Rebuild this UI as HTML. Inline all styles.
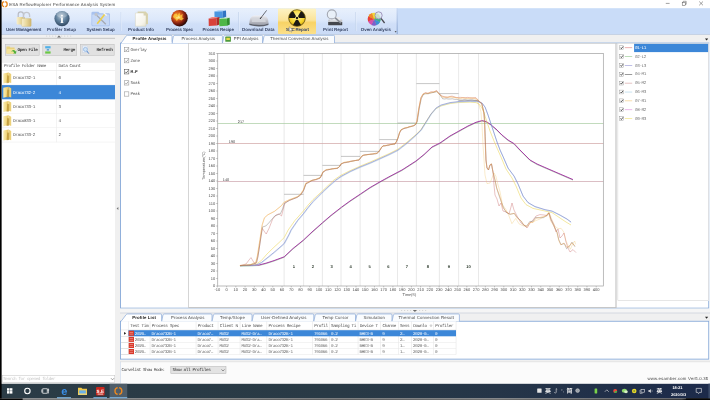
<!DOCTYPE html>
<html lang="en"><head><meta charset="utf-8"><title>ESA ReflowExplorer Performance Analysis System</title>
<style>
html,body{margin:0;padding:0;}
body{width:710px;height:400px;position:relative;overflow:hidden;background:#fff;}
#app{position:absolute;left:0;top:0;width:7100px;height:4000px;transform:scale(0.1);transform-origin:0 0;overflow:hidden;will-change:transform;}
.b{position:absolute;display:block;overflow:visible;}
.t{position:absolute;white-space:nowrap;display:block;text-rendering:geometricPrecision;}
svg text{text-rendering:geometricPrecision;}
.f-s{font-family:"Liberation Sans",sans-serif;}
.f-sb{font-family:"Liberation Sans",sans-serif;font-weight:bold;}
.f-m{font-family:"Liberation Mono",monospace;}
.f-mb{font-family:"Liberation Mono",monospace;font-weight:bold;}
</style></head><body><div id="app">
<div class="b " style="left:0px;top:0px;width:7100px;height:4000px;background:#ffffff;"></div>
<span class="t f-s" style="left:92px;top:14.4px;font-size:44px;line-height:57.2px;color:#454545;letter-spacing:1.46px;">ESA ReflowExplorer Performance Analysis System</span>
<div class="b " style="left:0px;top:82px;width:7100px;height:262px;background:#c9dcf8;"></div>
<div class="b " style="left:0px;top:82px;width:3975px;height:262px;background:linear-gradient(#e8f0fc 0%,#dce8fb 45%,#d0dff8 60%,#cadbf6 100%);"></div>
<div class="b " style="left:3966px;top:82px;width:12px;height:262px;background:linear-gradient(#c4d6f2,#8fa9d4);"></div>
<div class="b " style="left:2780px;top:86px;width:380px;height:254px;background:linear-gradient(#fdf3c4 0%,#fbe49a 45%,#f8d366 55%,#fbe08a 100%);border-radius:10px;"></div>
<div class="b " style="left:1207px;top:120px;width:6px;height:190px;background:#c0d0ea;"></div>
<div class="b " style="left:1213px;top:120px;width:5px;height:190px;background:#e8f0fc;"></div>
<div class="b " style="left:2384px;top:120px;width:6px;height:190px;background:#c0d0ea;"></div>
<div class="b " style="left:2390px;top:120px;width:5px;height:190px;background:#e8f0fc;"></div>
<div class="b " style="left:3553px;top:120px;width:6px;height:190px;background:#c0d0ea;"></div>
<div class="b " style="left:3559px;top:120px;width:5px;height:190px;background:#e8f0fc;"></div>
<span class="t f-sb" style="left:60px;top:260.7px;font-size:45px;line-height:58.5px;color:#3a4868;letter-spacing:-2.51px;">User Management</span>
<span class="t f-sb" style="left:470px;top:260.7px;font-size:45px;line-height:58.5px;color:#3a4868;letter-spacing:-0.36px;">Profiler Setup</span>
<span class="t f-sb" style="left:865px;top:260.7px;font-size:45px;line-height:58.5px;color:#3a4868;letter-spacing:-1.38px;">System Setup</span>
<span class="t f-sb" style="left:1280px;top:260.7px;font-size:45px;line-height:58.5px;color:#3a4868;letter-spacing:-0.41px;">Product Info</span>
<span class="t f-sb" style="left:1660px;top:260.7px;font-size:45px;line-height:58.5px;color:#3a4868;letter-spacing:-2.35px;">Process Spec</span>
<span class="t f-sb" style="left:2025px;top:260.7px;font-size:45px;line-height:58.5px;color:#3a4868;letter-spacing:-1.59px;">Process Recipe</span>
<span class="t f-sb" style="left:2420px;top:260.7px;font-size:45px;line-height:58.5px;color:#3a4868;letter-spacing:0.07px;">Download Data</span>
<span class="t f-sb" style="left:2860px;top:260.7px;font-size:45px;line-height:58.5px;color:#3a4868;letter-spacing:-2.3px;">SPC Report</span>
<span class="t f-sb" style="left:3230px;top:260.7px;font-size:45px;line-height:58.5px;color:#3a4868;letter-spacing:-0.83px;">Print Report</span>
<span class="t f-sb" style="left:3608px;top:260.7px;font-size:45px;line-height:58.5px;color:#3a4868;letter-spacing:-0.64px;">Oven  Analysis</span>
<div class="b " style="left:0px;top:344px;width:7100px;height:90px;background:#f0f0f0;"></div>
<div class="b " style="left:0px;top:342px;width:7100px;height:5px;background:#9fb3d3;"></div>
<div class="b " style="left:0px;top:380px;width:1200px;height:3460px;background:#f0f0f0;"></div>
<div class="b " style="left:20px;top:379px;width:1130px;height:6px;background:#a9a9a9;"></div>
<div class="b " style="left:460px;top:356px;width:12px;height:10px;background:#d6d6d6;"></div>
<div class="b " style="left:490px;top:356px;width:12px;height:10px;background:#d6d6d6;"></div>
<div class="b " style="left:520px;top:356px;width:12px;height:10px;background:#d6d6d6;"></div>
<div class="b " style="left:550px;top:356px;width:12px;height:10px;background:#d6d6d6;"></div>
<div class="b " style="left:580px;top:356px;width:12px;height:10px;background:#d6d6d6;"></div>
<div class="b " style="left:610px;top:356px;width:12px;height:10px;background:#d6d6d6;"></div>
<div class="b " style="left:640px;top:356px;width:12px;height:10px;background:#d6d6d6;"></div>
<div class="b " style="left:670px;top:356px;width:12px;height:10px;background:#d6d6d6;"></div>
<div class="b " style="left:700px;top:356px;width:12px;height:10px;background:#d6d6d6;"></div>
<svg class="b" style="left:565px;top:350px;width:50px;height:30px" viewBox="0 0 5 3"><path d="M0.5 2.5 L2.5 0.5 L4.5 2.5 Z" fill="#6a6a6a"/></svg>
<div class="b " style="left:50px;top:440px;width:344px;height:116px;background:#e1e1e1;border:5px solid #bdbdbd;box-sizing:border-box;"></div>
<span class="t f-mb" style="left:175px;top:471.4px;font-size:44px;line-height:57.2px;color:#3a3a3a;letter-spacing:-4.18px;">Open File</span>
<div class="b " style="left:426px;top:440px;width:344px;height:116px;background:#e1e1e1;border:5px solid #bdbdbd;box-sizing:border-box;"></div>
<span class="t f-mb" style="left:635px;top:471.4px;font-size:44px;line-height:57.2px;color:#3a3a3a;letter-spacing:-3.4px;">Merge</span>
<div class="b " style="left:800px;top:440px;width:344px;height:116px;background:#e1e1e1;border:5px solid #bdbdbd;box-sizing:border-box;"></div>
<span class="t f-mb" style="left:965px;top:471.4px;font-size:44px;line-height:57.2px;color:#3a3a3a;letter-spacing:-3.55px;">Refresh</span>
<div class="b " style="left:20px;top:620px;width:1130px;height:3134px;background:#ffffff;"></div>
<div class="b " style="left:20px;top:620px;width:1130px;height:87px;background:#ffffff;border-bottom:5px solid #e0e0e0;border-top:5px solid #e5e5e5;box-sizing:border-box;"></div>
<div class="b " style="left:564px;top:620px;width:5px;height:802px;background:#e6e6e6;"></div>
<span class="t f-m" style="left:40px;top:635.4px;font-size:44px;line-height:57.2px;color:#555;letter-spacing:-4.3px;">Profile Folder Name</span>
<span class="t f-m" style="left:586px;top:635.4px;font-size:44px;line-height:57.2px;color:#555;letter-spacing:-4.4px;">Data Count</span>
<div class="b " style="left:20px;top:846.7px;width:1130px;height:5px;background:#ececec;"></div>
<span class="t f-m" style="left:130px;top:752.8px;font-size:44px;line-height:57.2px;color:#5a5a5a;letter-spacing:-4.4px;">Draco732-1</span>
<span class="t f-m" style="left:586px;top:752.8px;font-size:44px;line-height:57.2px;color:#5a5a5a;">0</span>
<svg class="b" style="left:30px;top:723px;width:95px;height:115px" viewBox="0 0 9.5 11.5"><defs><linearGradient id="fg0" x1="0" x2="1"><stop offset="0" stop-color="#faecb0"/><stop offset="0.55" stop-color="#f2d984"/><stop offset="1" stop-color="#e2bc58"/></linearGradient></defs><path d="M0.3 1.2 L5.6 0.2 L5.6 10 L0.3 11.2 Z" fill="url(#fg0)"/><path d="M5.6 0.2 L8.2 1.6 L8.2 10.8 L5.6 10 Z" fill="#ecd078"/><path d="M4.2 3 L6.2 3.4 L6 10.6 L3.6 10.9 Z" fill="#b8902e" opacity="0.7"/></svg>
<div class="b " style="left:20px;top:850.7px;width:1130px;height:142.7px;background:#3c87d8;"></div>
<span class="t f-m" style="left:130px;top:895.5px;font-size:44px;line-height:57.2px;color:#fff;letter-spacing:-4.4px;">Draco732-2</span>
<span class="t f-m" style="left:586px;top:895.5px;font-size:44px;line-height:57.2px;color:#fff;">4</span>
<svg class="b" style="left:30px;top:865.7px;width:95px;height:115px" viewBox="0 0 9.5 11.5"><defs><linearGradient id="fg1" x1="0" x2="1"><stop offset="0" stop-color="#faecb0"/><stop offset="0.55" stop-color="#f2d984"/><stop offset="1" stop-color="#e2bc58"/></linearGradient></defs><path d="M0.3 1.2 L5.6 0.2 L5.6 10 L0.3 11.2 Z" fill="url(#fg1)"/><path d="M5.6 0.2 L8.2 1.6 L8.2 10.8 L5.6 10 Z" fill="#ecd078"/><path d="M4.2 3 L6.2 3.4 L6 10.6 L3.6 10.9 Z" fill="#b8902e" opacity="0.7"/></svg>
<div class="b " style="left:20px;top:1132.1px;width:1130px;height:5px;background:#ececec;"></div>
<span class="t f-m" style="left:130px;top:1038.2px;font-size:44px;line-height:57.2px;color:#5a5a5a;letter-spacing:-4.4px;">Draco733-1</span>
<span class="t f-m" style="left:586px;top:1038.2px;font-size:44px;line-height:57.2px;color:#5a5a5a;">3</span>
<svg class="b" style="left:30px;top:1008.4px;width:95px;height:115px" viewBox="0 0 9.5 11.5"><defs><linearGradient id="fg2" x1="0" x2="1"><stop offset="0" stop-color="#faecb0"/><stop offset="0.55" stop-color="#f2d984"/><stop offset="1" stop-color="#e2bc58"/></linearGradient></defs><path d="M0.3 1.2 L5.6 0.2 L5.6 10 L0.3 11.2 Z" fill="url(#fg2)"/><path d="M5.6 0.2 L8.2 1.6 L8.2 10.8 L5.6 10 Z" fill="#ecd078"/><path d="M4.2 3 L6.2 3.4 L6 10.6 L3.6 10.9 Z" fill="#b8902e" opacity="0.7"/></svg>
<div class="b " style="left:20px;top:1274.8px;width:1130px;height:5px;background:#ececec;"></div>
<span class="t f-m" style="left:130px;top:1180.9px;font-size:44px;line-height:57.2px;color:#5a5a5a;letter-spacing:-4.4px;">Draco833-1</span>
<span class="t f-m" style="left:586px;top:1180.9px;font-size:44px;line-height:57.2px;color:#5a5a5a;">4</span>
<svg class="b" style="left:30px;top:1151.1px;width:95px;height:115px" viewBox="0 0 9.5 11.5"><defs><linearGradient id="fg3" x1="0" x2="1"><stop offset="0" stop-color="#faecb0"/><stop offset="0.55" stop-color="#f2d984"/><stop offset="1" stop-color="#e2bc58"/></linearGradient></defs><path d="M0.3 1.2 L5.6 0.2 L5.6 10 L0.3 11.2 Z" fill="url(#fg3)"/><path d="M5.6 0.2 L8.2 1.6 L8.2 10.8 L5.6 10 Z" fill="#ecd078"/><path d="M4.2 3 L6.2 3.4 L6 10.6 L3.6 10.9 Z" fill="#b8902e" opacity="0.7"/></svg>
<div class="b " style="left:20px;top:1417.5px;width:1130px;height:5px;background:#ececec;"></div>
<span class="t f-m" style="left:130px;top:1323.5px;font-size:44px;line-height:57.2px;color:#5a5a5a;letter-spacing:-4.4px;">Draco733-2</span>
<span class="t f-m" style="left:586px;top:1323.5px;font-size:44px;line-height:57.2px;color:#5a5a5a;">2</span>
<svg class="b" style="left:30px;top:1293.8px;width:95px;height:115px" viewBox="0 0 9.5 11.5"><defs><linearGradient id="fg4" x1="0" x2="1"><stop offset="0" stop-color="#faecb0"/><stop offset="0.55" stop-color="#f2d984"/><stop offset="1" stop-color="#e2bc58"/></linearGradient></defs><path d="M0.3 1.2 L5.6 0.2 L5.6 10 L0.3 11.2 Z" fill="url(#fg4)"/><path d="M5.6 0.2 L8.2 1.6 L8.2 10.8 L5.6 10 Z" fill="#ecd078"/><path d="M4.2 3 L6.2 3.4 L6 10.6 L3.6 10.9 Z" fill="#b8902e" opacity="0.7"/></svg>
<div class="b " style="left:20px;top:3754px;width:1130px;height:72px;background:#ffffff;border:5px solid #c4c4c4;box-sizing:border-box;"></div>
<span class="t f-m" style="left:32px;top:3761.4px;font-size:44px;line-height:57.2px;color:#c9c9c9;letter-spacing:-4.74px;">Search for opened folder</span>
<svg class="b" style="left:1105px;top:3776px;width:40px;height:30px" viewBox="0 0 4 3"><path d="M0.5 0.6 L2 2.2 L3.5 0.6" fill="none" stroke="#666" stroke-width="0.6"/></svg>
<svg class="b" style="left:1160px;top:2065px;width:30px;height:40px" viewBox="0 0 3 4"><path d="M2.4 0.4 L0.6 2 L2.4 3.6 Z" fill="#777"/></svg>
<div class="b " style="left:1200px;top:426px;width:5892px;height:2660px;background:#ffffff;border:9px solid #86a8d8;box-sizing:border-box;"></div>
<svg class="b" style="left:1720px;top:350px;width:534px;height:82px" viewBox="0 0 53.40 8.20"><path d="M0 8.20 L1.40 1.2 Q2.00 0.35 3.00 0.35 L49.40 0.35 Q50.40 0.35 50.40 1.4 L50.40 8.20" fill="#fafcfe" stroke="#86a8d8" stroke-width="0.7"/></svg>
<span class="t f-s" style="left:1814px;top:362px;font-size:43px;line-height:55.9px;color:#484848;letter-spacing:0.69px;">Process Analysis</span>
<svg class="b" style="left:2224px;top:350px;width:432px;height:82px" viewBox="0 0 43.20 8.20"><path d="M0 8.20 L1.40 1.2 Q2.00 0.35 3.00 0.35 L39.20 0.35 Q40.20 0.35 40.20 1.4 L40.20 8.20" fill="#fafcfe" stroke="#86a8d8" stroke-width="0.7"/></svg>
<span class="t f-s" style="left:2338px;top:362px;font-size:43px;line-height:55.9px;color:#484848;letter-spacing:0.75px;">PPI Analysis</span>
<svg class="b" style="left:2626px;top:350px;width:749px;height:82px" viewBox="0 0 74.90 8.20"><path d="M0 8.20 L1.40 1.2 Q2.00 0.35 3.00 0.35 L70.90 0.35 Q71.90 0.35 71.90 1.4 L71.90 8.20" fill="#fafcfe" stroke="#86a8d8" stroke-width="0.7"/></svg>
<span class="t f-s" style="left:2703px;top:362px;font-size:43px;line-height:55.9px;color:#484848;letter-spacing:0.98px;">Thermal Convection Analysis</span>
<svg class="b" style="left:1210px;top:350px;width:540px;height:82px" viewBox="0 0 54.00 8.20"><path d="M0 8.20 L5.00 1.2 Q5.60 0.35 6.60 0.35 L50.00 0.35 Q51.00 0.35 51.00 1.4 L51.00 8.20" fill="#ffffff" stroke="#86a8d8" stroke-width="0.7"/></svg>
<span class="t f-sb" style="left:1326px;top:362px;font-size:43px;line-height:55.9px;color:#1a1a1a;letter-spacing:1.19px;">Profile Analysis</span>
<div class="b " style="left:1220px;top:423px;width:496px;height:10px;background:#ffffff;"></div>
<div class="b " style="left:2253px;top:366px;width:56px;height:52px;background:#4e9a3a;border-radius:6px;"></div>
<div class="b " style="left:2263px;top:378px;width:36px;height:22px;background:#e8d84a;"></div>
<svg class="b" style="left:7046px;top:382px;width:40px;height:26px" viewBox="0 0 4 2.6"><path d="M0.4 0.3 L3.6 0.3 L2 2.3 Z" fill="#222"/></svg>
<div class="b " style="left:1882px;top:432px;width:5px;height:2646px;background:#b4b4b4;"></div>
<div class="b " style="left:1243px;top:472px;width:48px;height:48px;background:#fff;border:5px solid #8a8a8a;box-sizing:border-box;"></div>
<svg class="b" style="left:1243px;top:472px;width:48px;height:48px" viewBox="0 0 4.8 4.8"><path d="M1 2.4 L2 3.6 L3.9 1.1" fill="none" stroke="#8a8a8a" stroke-width="0.7"/></svg>
<span class="t f-m" style="left:1306px;top:469.4px;font-size:44px;line-height:57.2px;color:#606060;letter-spacing:-3.8px;">Overlay</span>
<div class="b " style="left:1243px;top:583px;width:48px;height:48px;background:#fff;border:5px solid #8a8a8a;box-sizing:border-box;"></div>
<svg class="b" style="left:1243px;top:583px;width:48px;height:48px" viewBox="0 0 4.8 4.8"><path d="M1 2.4 L2 3.6 L3.9 1.1" fill="none" stroke="#8a8a8a" stroke-width="0.7"/></svg>
<span class="t f-m" style="left:1306px;top:580.4px;font-size:44px;line-height:57.2px;color:#606060;letter-spacing:-3.8px;">Zone</span>
<div class="b " style="left:1243px;top:694px;width:48px;height:48px;background:#fff;border:5px solid #444;box-sizing:border-box;"></div>
<svg class="b" style="left:1243px;top:694px;width:48px;height:48px" viewBox="0 0 4.8 4.8"><path d="M1 2.4 L2 3.6 L3.9 1.1" fill="none" stroke="#444" stroke-width="0.7"/></svg>
<span class="t f-mb" style="left:1306px;top:691.4px;font-size:44px;line-height:57.2px;color:#222;letter-spacing:-3.8px;">M.P</span>
<div class="b " style="left:1243px;top:805px;width:48px;height:48px;background:#fff;border:5px solid #8a8a8a;box-sizing:border-box;"></div>
<svg class="b" style="left:1243px;top:805px;width:48px;height:48px" viewBox="0 0 4.8 4.8"><path d="M1 2.4 L2 3.6 L3.9 1.1" fill="none" stroke="#8a8a8a" stroke-width="0.7"/></svg>
<span class="t f-m" style="left:1306px;top:802.4px;font-size:44px;line-height:57.2px;color:#606060;letter-spacing:-3.8px;">Soak</span>
<div class="b " style="left:1243px;top:916px;width:48px;height:48px;background:#fff;border:5px solid #8a8a8a;box-sizing:border-box;"></div>
<span class="t f-m" style="left:1306px;top:913.4px;font-size:44px;line-height:57.2px;color:#606060;letter-spacing:-3.8px;">Peak</span>
<div class="b " style="left:1884px;top:432px;width:4280px;height:2646px;background:#ffffff;border:5px solid #b9b9b9;border-right:8px solid #a8a8a8;border-bottom:7px solid #b0b0b0;box-sizing:border-box;"></div>
<div class="b " style="left:6176px;top:432px;width:912px;height:2576px;background:#ffffff;border:5px solid #cdcdcd;box-sizing:border-box;"></div>
<svg class="b" style="left:0;top:0;width:7100px;height:4000px" viewBox="0 0 710 400" font-family="Liberation Sans, sans-serif">
<line x1="284.1" y1="53.5" x2="284.1" y2="286.0" stroke="#d6d6d6" stroke-width="0.55"/>
<line x1="303.6" y1="53.5" x2="303.6" y2="286.0" stroke="#d6d6d6" stroke-width="0.55"/>
<line x1="322.4" y1="53.5" x2="322.4" y2="286.0" stroke="#d6d6d6" stroke-width="0.55"/>
<line x1="341.0" y1="53.5" x2="341.0" y2="286.0" stroke="#d6d6d6" stroke-width="0.55"/>
<line x1="360.1" y1="53.5" x2="360.1" y2="286.0" stroke="#d6d6d6" stroke-width="0.55"/>
<line x1="379.3" y1="53.5" x2="379.3" y2="286.0" stroke="#d6d6d6" stroke-width="0.55"/>
<line x1="397.5" y1="53.5" x2="397.5" y2="286.0" stroke="#d6d6d6" stroke-width="0.55"/>
<line x1="416.4" y1="53.5" x2="416.4" y2="286.0" stroke="#d6d6d6" stroke-width="0.55"/>
<line x1="439.4" y1="53.5" x2="439.4" y2="286.0" stroke="#d6d6d6" stroke-width="0.55"/>
<line x1="458.6" y1="53.5" x2="458.6" y2="286.0" stroke="#d6d6d6" stroke-width="0.55"/>
<line x1="478.5" y1="53.5" x2="478.5" y2="286.0" stroke="#d6d6d6" stroke-width="0.55"/>
<line x1="217.75" y1="123.50" x2="603.3" y2="123.50" stroke="#a8cca0" stroke-width="0.7"/>
<text x="241" y="122.50" font-size="3.8" fill="#444" text-anchor="middle">217</text>
<line x1="217.75" y1="143.50" x2="603.3" y2="143.50" stroke="#d0a4a4" stroke-width="0.7"/>
<text x="232" y="142.50" font-size="3.8" fill="#444" text-anchor="middle">190</text>
<line x1="217.75" y1="181.50" x2="603.3" y2="181.50" stroke="#cca2aa" stroke-width="0.7"/>
<text x="226" y="180.50" font-size="3.8" fill="#444" text-anchor="middle">140</text>
<line x1="284.1" y1="194.3" x2="303.6" y2="194.3" stroke="#969696" stroke-width="0.55"/>
<line x1="303.6" y1="175.4" x2="322.4" y2="175.4" stroke="#969696" stroke-width="0.55"/>
<line x1="322.4" y1="165.4" x2="341.0" y2="165.4" stroke="#969696" stroke-width="0.55"/>
<line x1="341.0" y1="156.4" x2="360.1" y2="156.4" stroke="#969696" stroke-width="0.55"/>
<line x1="360.1" y1="151.4" x2="379.3" y2="151.4" stroke="#969696" stroke-width="0.55"/>
<line x1="379.3" y1="139.6" x2="397.5" y2="139.6" stroke="#969696" stroke-width="0.55"/>
<line x1="397.5" y1="123.0" x2="416.4" y2="123.0" stroke="#969696" stroke-width="0.55"/>
<line x1="416.4" y1="83.6" x2="439.4" y2="83.6" stroke="#969696" stroke-width="0.55"/>
<line x1="439.4" y1="93.6" x2="458.6" y2="93.6" stroke="#969696" stroke-width="0.55"/>
<line x1="458.6" y1="100.4" x2="478.5" y2="100.4" stroke="#969696" stroke-width="0.55"/>
<text x="293.9" y="267.6" font-size="4.1" fill="#2c3a2c" text-anchor="middle" font-weight="bold">1</text>
<text x="313.0" y="267.6" font-size="4.1" fill="#2c3a2c" text-anchor="middle" font-weight="bold">2</text>
<text x="331.7" y="267.6" font-size="4.1" fill="#2c3a2c" text-anchor="middle" font-weight="bold">3</text>
<text x="350.6" y="267.6" font-size="4.1" fill="#2c3a2c" text-anchor="middle" font-weight="bold">4</text>
<text x="369.7" y="267.6" font-size="4.1" fill="#2c3a2c" text-anchor="middle" font-weight="bold">5</text>
<text x="388.4" y="267.6" font-size="4.1" fill="#2c3a2c" text-anchor="middle" font-weight="bold">6</text>
<text x="406.9" y="267.6" font-size="4.1" fill="#2c3a2c" text-anchor="middle" font-weight="bold">7</text>
<text x="427.9" y="267.6" font-size="4.1" fill="#2c3a2c" text-anchor="middle" font-weight="bold">8</text>
<text x="449.0" y="267.6" font-size="4.1" fill="#2c3a2c" text-anchor="middle" font-weight="bold">9</text>
<text x="468.6" y="267.6" font-size="4.1" fill="#2c3a2c" text-anchor="middle" font-weight="bold">10</text>
<rect x="217.75" y="53.5" width="385.54999999999995" height="232.5" fill="none" stroke="#989898" stroke-width="0.65"/>
<line x1="216.15" y1="286.00" x2="217.75" y2="286.00" stroke="#8f8f8f" stroke-width="0.5"/>
<text x="215.15" y="287.30" font-size="4" fill="#484848" text-anchor="end">0</text>
<line x1="216.15" y1="278.50" x2="217.75" y2="278.50" stroke="#8f8f8f" stroke-width="0.5"/>
<text x="215.15" y="279.80" font-size="4" fill="#484848" text-anchor="end">10</text>
<line x1="216.15" y1="271.00" x2="217.75" y2="271.00" stroke="#8f8f8f" stroke-width="0.5"/>
<text x="215.15" y="272.30" font-size="4" fill="#484848" text-anchor="end">20</text>
<line x1="216.15" y1="263.50" x2="217.75" y2="263.50" stroke="#8f8f8f" stroke-width="0.5"/>
<text x="215.15" y="264.80" font-size="4" fill="#484848" text-anchor="end">30</text>
<line x1="216.15" y1="256.00" x2="217.75" y2="256.00" stroke="#8f8f8f" stroke-width="0.5"/>
<text x="215.15" y="257.30" font-size="4" fill="#484848" text-anchor="end">40</text>
<line x1="216.15" y1="248.50" x2="217.75" y2="248.50" stroke="#8f8f8f" stroke-width="0.5"/>
<text x="215.15" y="249.80" font-size="4" fill="#484848" text-anchor="end">50</text>
<line x1="216.15" y1="241.00" x2="217.75" y2="241.00" stroke="#8f8f8f" stroke-width="0.5"/>
<text x="215.15" y="242.30" font-size="4" fill="#484848" text-anchor="end">60</text>
<line x1="216.15" y1="233.50" x2="217.75" y2="233.50" stroke="#8f8f8f" stroke-width="0.5"/>
<text x="215.15" y="234.80" font-size="4" fill="#484848" text-anchor="end">70</text>
<line x1="216.15" y1="226.00" x2="217.75" y2="226.00" stroke="#8f8f8f" stroke-width="0.5"/>
<text x="215.15" y="227.30" font-size="4" fill="#484848" text-anchor="end">80</text>
<line x1="216.15" y1="218.50" x2="217.75" y2="218.50" stroke="#8f8f8f" stroke-width="0.5"/>
<text x="215.15" y="219.80" font-size="4" fill="#484848" text-anchor="end">90</text>
<line x1="216.15" y1="211.00" x2="217.75" y2="211.00" stroke="#8f8f8f" stroke-width="0.5"/>
<text x="215.15" y="212.30" font-size="4" fill="#484848" text-anchor="end">100</text>
<line x1="216.15" y1="203.50" x2="217.75" y2="203.50" stroke="#8f8f8f" stroke-width="0.5"/>
<text x="215.15" y="204.80" font-size="4" fill="#484848" text-anchor="end">110</text>
<line x1="216.15" y1="196.00" x2="217.75" y2="196.00" stroke="#8f8f8f" stroke-width="0.5"/>
<text x="215.15" y="197.30" font-size="4" fill="#484848" text-anchor="end">120</text>
<line x1="216.15" y1="188.50" x2="217.75" y2="188.50" stroke="#8f8f8f" stroke-width="0.5"/>
<text x="215.15" y="189.80" font-size="4" fill="#484848" text-anchor="end">130</text>
<line x1="216.15" y1="181.00" x2="217.75" y2="181.00" stroke="#8f8f8f" stroke-width="0.5"/>
<text x="215.15" y="182.30" font-size="4" fill="#484848" text-anchor="end">140</text>
<line x1="216.15" y1="173.50" x2="217.75" y2="173.50" stroke="#8f8f8f" stroke-width="0.5"/>
<text x="215.15" y="174.80" font-size="4" fill="#484848" text-anchor="end">150</text>
<line x1="216.15" y1="166.00" x2="217.75" y2="166.00" stroke="#8f8f8f" stroke-width="0.5"/>
<text x="215.15" y="167.30" font-size="4" fill="#484848" text-anchor="end">160</text>
<line x1="216.15" y1="158.50" x2="217.75" y2="158.50" stroke="#8f8f8f" stroke-width="0.5"/>
<text x="215.15" y="159.80" font-size="4" fill="#484848" text-anchor="end">170</text>
<line x1="216.15" y1="151.00" x2="217.75" y2="151.00" stroke="#8f8f8f" stroke-width="0.5"/>
<text x="215.15" y="152.30" font-size="4" fill="#484848" text-anchor="end">180</text>
<line x1="216.15" y1="143.50" x2="217.75" y2="143.50" stroke="#8f8f8f" stroke-width="0.5"/>
<text x="215.15" y="144.80" font-size="4" fill="#484848" text-anchor="end">190</text>
<line x1="216.15" y1="136.00" x2="217.75" y2="136.00" stroke="#8f8f8f" stroke-width="0.5"/>
<text x="215.15" y="137.30" font-size="4" fill="#484848" text-anchor="end">200</text>
<line x1="216.15" y1="128.50" x2="217.75" y2="128.50" stroke="#8f8f8f" stroke-width="0.5"/>
<text x="215.15" y="129.80" font-size="4" fill="#484848" text-anchor="end">210</text>
<line x1="216.15" y1="121.00" x2="217.75" y2="121.00" stroke="#8f8f8f" stroke-width="0.5"/>
<text x="215.15" y="122.30" font-size="4" fill="#484848" text-anchor="end">220</text>
<line x1="216.15" y1="113.50" x2="217.75" y2="113.50" stroke="#8f8f8f" stroke-width="0.5"/>
<text x="215.15" y="114.80" font-size="4" fill="#484848" text-anchor="end">230</text>
<line x1="216.15" y1="106.00" x2="217.75" y2="106.00" stroke="#8f8f8f" stroke-width="0.5"/>
<text x="215.15" y="107.30" font-size="4" fill="#484848" text-anchor="end">240</text>
<line x1="216.15" y1="98.50" x2="217.75" y2="98.50" stroke="#8f8f8f" stroke-width="0.5"/>
<text x="215.15" y="99.80" font-size="4" fill="#484848" text-anchor="end">250</text>
<line x1="216.15" y1="91.00" x2="217.75" y2="91.00" stroke="#8f8f8f" stroke-width="0.5"/>
<text x="215.15" y="92.30" font-size="4" fill="#484848" text-anchor="end">260</text>
<line x1="216.15" y1="83.50" x2="217.75" y2="83.50" stroke="#8f8f8f" stroke-width="0.5"/>
<text x="215.15" y="84.80" font-size="4" fill="#484848" text-anchor="end">270</text>
<line x1="216.15" y1="76.00" x2="217.75" y2="76.00" stroke="#8f8f8f" stroke-width="0.5"/>
<text x="215.15" y="77.30" font-size="4" fill="#484848" text-anchor="end">280</text>
<line x1="216.15" y1="68.50" x2="217.75" y2="68.50" stroke="#8f8f8f" stroke-width="0.5"/>
<text x="215.15" y="69.80" font-size="4" fill="#484848" text-anchor="end">290</text>
<line x1="216.15" y1="61.00" x2="217.75" y2="61.00" stroke="#8f8f8f" stroke-width="0.5"/>
<text x="215.15" y="62.30" font-size="4" fill="#484848" text-anchor="end">300</text>
<line x1="216.15" y1="53.50" x2="217.75" y2="53.50" stroke="#8f8f8f" stroke-width="0.5"/>
<text x="215.15" y="54.80" font-size="4" fill="#484848" text-anchor="end">310</text>
<line x1="217.36" y1="286.0" x2="217.36" y2="287.4" stroke="#8f8f8f" stroke-width="0.5"/>
<text x="217.36" y="291.4" font-size="4" fill="#484848" text-anchor="middle">-10</text>
<line x1="226.60" y1="286.0" x2="226.60" y2="287.4" stroke="#8f8f8f" stroke-width="0.5"/>
<text x="226.60" y="291.4" font-size="4" fill="#484848" text-anchor="middle">0</text>
<line x1="235.84" y1="286.0" x2="235.84" y2="287.4" stroke="#8f8f8f" stroke-width="0.5"/>
<text x="235.84" y="291.4" font-size="4" fill="#484848" text-anchor="middle">10</text>
<line x1="245.08" y1="286.0" x2="245.08" y2="287.4" stroke="#8f8f8f" stroke-width="0.5"/>
<text x="245.08" y="291.4" font-size="4" fill="#484848" text-anchor="middle">20</text>
<line x1="254.32" y1="286.0" x2="254.32" y2="287.4" stroke="#8f8f8f" stroke-width="0.5"/>
<text x="254.32" y="291.4" font-size="4" fill="#484848" text-anchor="middle">30</text>
<line x1="263.56" y1="286.0" x2="263.56" y2="287.4" stroke="#8f8f8f" stroke-width="0.5"/>
<text x="263.56" y="291.4" font-size="4" fill="#484848" text-anchor="middle">40</text>
<line x1="272.80" y1="286.0" x2="272.80" y2="287.4" stroke="#8f8f8f" stroke-width="0.5"/>
<text x="272.80" y="291.4" font-size="4" fill="#484848" text-anchor="middle">50</text>
<line x1="282.04" y1="286.0" x2="282.04" y2="287.4" stroke="#8f8f8f" stroke-width="0.5"/>
<text x="282.04" y="291.4" font-size="4" fill="#484848" text-anchor="middle">60</text>
<line x1="291.28" y1="286.0" x2="291.28" y2="287.4" stroke="#8f8f8f" stroke-width="0.5"/>
<text x="291.28" y="291.4" font-size="4" fill="#484848" text-anchor="middle">70</text>
<line x1="300.52" y1="286.0" x2="300.52" y2="287.4" stroke="#8f8f8f" stroke-width="0.5"/>
<text x="300.52" y="291.4" font-size="4" fill="#484848" text-anchor="middle">80</text>
<line x1="309.76" y1="286.0" x2="309.76" y2="287.4" stroke="#8f8f8f" stroke-width="0.5"/>
<text x="309.76" y="291.4" font-size="4" fill="#484848" text-anchor="middle">90</text>
<line x1="319.00" y1="286.0" x2="319.00" y2="287.4" stroke="#8f8f8f" stroke-width="0.5"/>
<text x="319.00" y="291.4" font-size="4" fill="#484848" text-anchor="middle">100</text>
<line x1="328.24" y1="286.0" x2="328.24" y2="287.4" stroke="#8f8f8f" stroke-width="0.5"/>
<text x="328.24" y="291.4" font-size="4" fill="#484848" text-anchor="middle">110</text>
<line x1="337.48" y1="286.0" x2="337.48" y2="287.4" stroke="#8f8f8f" stroke-width="0.5"/>
<text x="337.48" y="291.4" font-size="4" fill="#484848" text-anchor="middle">120</text>
<line x1="346.72" y1="286.0" x2="346.72" y2="287.4" stroke="#8f8f8f" stroke-width="0.5"/>
<text x="346.72" y="291.4" font-size="4" fill="#484848" text-anchor="middle">130</text>
<line x1="355.96" y1="286.0" x2="355.96" y2="287.4" stroke="#8f8f8f" stroke-width="0.5"/>
<text x="355.96" y="291.4" font-size="4" fill="#484848" text-anchor="middle">140</text>
<line x1="365.20" y1="286.0" x2="365.20" y2="287.4" stroke="#8f8f8f" stroke-width="0.5"/>
<text x="365.20" y="291.4" font-size="4" fill="#484848" text-anchor="middle">150</text>
<line x1="374.44" y1="286.0" x2="374.44" y2="287.4" stroke="#8f8f8f" stroke-width="0.5"/>
<text x="374.44" y="291.4" font-size="4" fill="#484848" text-anchor="middle">160</text>
<line x1="383.68" y1="286.0" x2="383.68" y2="287.4" stroke="#8f8f8f" stroke-width="0.5"/>
<text x="383.68" y="291.4" font-size="4" fill="#484848" text-anchor="middle">170</text>
<line x1="392.92" y1="286.0" x2="392.92" y2="287.4" stroke="#8f8f8f" stroke-width="0.5"/>
<text x="392.92" y="291.4" font-size="4" fill="#484848" text-anchor="middle">180</text>
<line x1="402.16" y1="286.0" x2="402.16" y2="287.4" stroke="#8f8f8f" stroke-width="0.5"/>
<text x="402.16" y="291.4" font-size="4" fill="#484848" text-anchor="middle">190</text>
<line x1="411.40" y1="286.0" x2="411.40" y2="287.4" stroke="#8f8f8f" stroke-width="0.5"/>
<text x="411.40" y="291.4" font-size="4" fill="#484848" text-anchor="middle">200</text>
<line x1="420.64" y1="286.0" x2="420.64" y2="287.4" stroke="#8f8f8f" stroke-width="0.5"/>
<text x="420.64" y="291.4" font-size="4" fill="#484848" text-anchor="middle">210</text>
<line x1="429.88" y1="286.0" x2="429.88" y2="287.4" stroke="#8f8f8f" stroke-width="0.5"/>
<text x="429.88" y="291.4" font-size="4" fill="#484848" text-anchor="middle">220</text>
<line x1="439.12" y1="286.0" x2="439.12" y2="287.4" stroke="#8f8f8f" stroke-width="0.5"/>
<text x="439.12" y="291.4" font-size="4" fill="#484848" text-anchor="middle">230</text>
<line x1="448.36" y1="286.0" x2="448.36" y2="287.4" stroke="#8f8f8f" stroke-width="0.5"/>
<text x="448.36" y="291.4" font-size="4" fill="#484848" text-anchor="middle">240</text>
<line x1="457.60" y1="286.0" x2="457.60" y2="287.4" stroke="#8f8f8f" stroke-width="0.5"/>
<text x="457.60" y="291.4" font-size="4" fill="#484848" text-anchor="middle">250</text>
<line x1="466.84" y1="286.0" x2="466.84" y2="287.4" stroke="#8f8f8f" stroke-width="0.5"/>
<text x="466.84" y="291.4" font-size="4" fill="#484848" text-anchor="middle">260</text>
<line x1="476.08" y1="286.0" x2="476.08" y2="287.4" stroke="#8f8f8f" stroke-width="0.5"/>
<text x="476.08" y="291.4" font-size="4" fill="#484848" text-anchor="middle">270</text>
<line x1="485.32" y1="286.0" x2="485.32" y2="287.4" stroke="#8f8f8f" stroke-width="0.5"/>
<text x="485.32" y="291.4" font-size="4" fill="#484848" text-anchor="middle">280</text>
<line x1="494.56" y1="286.0" x2="494.56" y2="287.4" stroke="#8f8f8f" stroke-width="0.5"/>
<text x="494.56" y="291.4" font-size="4" fill="#484848" text-anchor="middle">290</text>
<line x1="503.80" y1="286.0" x2="503.80" y2="287.4" stroke="#8f8f8f" stroke-width="0.5"/>
<text x="503.80" y="291.4" font-size="4" fill="#484848" text-anchor="middle">300</text>
<line x1="513.04" y1="286.0" x2="513.04" y2="287.4" stroke="#8f8f8f" stroke-width="0.5"/>
<text x="513.04" y="291.4" font-size="4" fill="#484848" text-anchor="middle">310</text>
<line x1="522.28" y1="286.0" x2="522.28" y2="287.4" stroke="#8f8f8f" stroke-width="0.5"/>
<text x="522.28" y="291.4" font-size="4" fill="#484848" text-anchor="middle">320</text>
<line x1="531.52" y1="286.0" x2="531.52" y2="287.4" stroke="#8f8f8f" stroke-width="0.5"/>
<text x="531.52" y="291.4" font-size="4" fill="#484848" text-anchor="middle">330</text>
<line x1="540.76" y1="286.0" x2="540.76" y2="287.4" stroke="#8f8f8f" stroke-width="0.5"/>
<text x="540.76" y="291.4" font-size="4" fill="#484848" text-anchor="middle">340</text>
<line x1="550.00" y1="286.0" x2="550.00" y2="287.4" stroke="#8f8f8f" stroke-width="0.5"/>
<text x="550.00" y="291.4" font-size="4" fill="#484848" text-anchor="middle">350</text>
<line x1="559.24" y1="286.0" x2="559.24" y2="287.4" stroke="#8f8f8f" stroke-width="0.5"/>
<text x="559.24" y="291.4" font-size="4" fill="#484848" text-anchor="middle">360</text>
<line x1="568.48" y1="286.0" x2="568.48" y2="287.4" stroke="#8f8f8f" stroke-width="0.5"/>
<text x="568.48" y="291.4" font-size="4" fill="#484848" text-anchor="middle">370</text>
<line x1="577.72" y1="286.0" x2="577.72" y2="287.4" stroke="#8f8f8f" stroke-width="0.5"/>
<text x="577.72" y="291.4" font-size="4" fill="#484848" text-anchor="middle">380</text>
<line x1="586.96" y1="286.0" x2="586.96" y2="287.4" stroke="#8f8f8f" stroke-width="0.5"/>
<text x="586.96" y="291.4" font-size="4" fill="#484848" text-anchor="middle">390</text>
<line x1="596.20" y1="286.0" x2="596.20" y2="287.4" stroke="#8f8f8f" stroke-width="0.5"/>
<text x="596.20" y="291.4" font-size="4" fill="#484848" text-anchor="middle">400</text>
<text x="409.4" y="296.4" font-size="3.9" fill="#505050" text-anchor="middle">Time(S)</text>
<text transform="translate(205.2,165.5) rotate(-90)" font-size="3.9" fill="#505050" text-anchor="middle">Temperature(℃)</text>
<polyline points="240.0,266.1 252.0,265.8 259.0,265.5 266.0,263.7 274.0,261.1 284.2,257.3 293.0,249.0 303.2,240.8 312.0,232.5 322.5,223.2 331.0,215.9 341.5,207.7 350.0,201.5 360.5,194.5 370.0,188.1 380.0,182.3 390.0,176.8 402.0,170.5 416.0,161.5 424.0,155.0 432.0,147.5 440.0,143.5 450.0,136.5 459.0,131.5 468.0,126.5 476.0,122.8 482.0,121.1 486.0,122.0 490.0,124.5 496.0,129.5 502.0,135.5 508.0,140.5 514.0,144.1 520.0,150.5 530.0,160.5 537.0,164.5 545.0,168.0 560.0,174.5 573.0,180.1" fill="none" stroke="#6aa86a" stroke-width="0.5" stroke-linejoin="round" opacity="1"/>
<polyline points="240.0,265.6 252.0,265.3 259.0,265.0 266.0,263.2 274.0,260.6 284.2,256.8 293.0,248.5 303.2,240.3 312.0,232.0 322.5,222.7 331.0,215.4 341.5,207.2 350.0,201.0 360.5,194.0 370.0,187.6 380.0,181.8 390.0,176.3 402.0,170.0 416.0,161.0 424.0,154.5 432.0,147.0 440.0,143.0 450.0,136.0 459.0,131.0 468.0,126.0 476.0,122.3 482.0,120.6 486.0,121.5 490.0,124.0 496.0,129.0 502.0,135.0 508.0,140.0 514.0,143.6 520.0,150.0 530.0,160.0 537.0,164.0 545.0,167.5 560.0,174.0 573.0,179.6" fill="none" stroke="#a83ca8" stroke-width="1.0" stroke-linejoin="round" opacity="1"/>
<polyline points="240.0,265.6 255.0,264.8 261.3,260.6 267.0,254.0 274.0,247.2 279.0,242.6 284.2,237.6 288.2,230.0 294.9,220.5 303.4,211.0 308.0,205.2 313.0,199.6 318.0,195.0 322.5,190.8 328.0,185.6 333.9,180.0 341.0,175.2 350.0,170.7 360.0,166.2 370.0,162.1 379.0,158.1 389.0,153.7 398.0,149.1 407.0,142.1 416.0,134.6 421.0,129.5 426.0,121.7 431.0,114.0 436.0,108.6 441.0,106.0 450.0,103.6 458.0,102.6 470.0,102.2 476.0,102.6 479.0,104.0 482.0,108.0 484.0,113.0 487.0,122.0 490.0,131.0 494.0,141.0 497.0,148.0 501.0,157.0 506.0,169.0 512.0,178.0 516.0,186.0 521.0,198.0 526.0,204.6 533.0,208.4 545.0,211.0 552.0,212.6 560.0,218.0 566.0,222.0 571.0,225.0" fill="none" stroke="#ecd860" stroke-width="0.6" stroke-linejoin="round" opacity="1"/>
<polyline points="240.3,266.1 256.3,265.5 261.6,263.0 267.3,258.5 274.3,252.8 279.3,248.5 284.5,243.9 289.5,234.5 291.3,230.5 297.8,221.0 303.7,214.1 308.3,208.0 313.3,202.0 318.3,197.0 322.8,192.5 329.3,186.5 336.1,180.5 341.3,176.9 350.3,172.0 360.3,167.5 370.3,163.5 379.3,159.5 389.3,155.0 398.3,150.5 407.3,143.5 416.3,135.5 421.3,130.5 426.3,122.5 431.3,114.5 436.3,108.5 441.3,105.5 450.3,103.1 458.3,102.1 470.3,101.5 478.3,101.9 482.3,103.5 485.3,107.5 488.3,115.5 491.3,124.5 494.3,133.5 497.3,142.5 500.3,150.5 503.3,157.0 508.3,168.5 514.3,176.5 518.3,184.5 523.3,196.5 528.3,203.0 535.3,207.0 545.3,210.1 552.3,211.5 560.3,215.5 567.3,219.5 571.3,222.5" fill="none" stroke="#a8c8e0" stroke-width="0.5" stroke-linejoin="round" opacity="1"/>
<polyline points="240.0,265.6 256.0,265.0 261.3,262.5 267.0,258.0 274.0,252.3 279.0,248.0 284.2,243.4 289.2,234.0 291.0,230.0 297.5,220.5 303.4,213.6 308.0,207.5 313.0,201.5 318.0,196.5 322.5,192.0 329.0,186.0 335.8,180.0 341.0,176.4 350.0,171.5 360.0,167.0 370.0,163.0 379.0,159.0 389.0,154.5 398.0,150.0 407.0,143.0 416.0,135.0 421.0,130.0 426.0,122.0 431.0,114.0 436.0,108.0 441.0,105.0 450.0,102.6 458.0,101.6 470.0,101.0 478.0,101.4 482.0,103.0 485.0,107.0 488.0,115.0 491.0,124.0 494.0,133.0 497.0,142.0 500.0,150.0 503.0,156.5 508.0,168.0 514.0,176.0 518.0,184.0 523.0,196.0 528.0,202.5 535.0,206.5 545.0,209.6 552.0,211.0 560.0,215.0 567.0,219.0 571.0,222.0" fill="none" stroke="#6c78c8" stroke-width="0.55" stroke-linejoin="round" opacity="1"/>
<polyline points="239.7,265.4 249.7,264.8 255.7,262.3 257.3,255.8 259.7,240.5 262.1,224.8 264.3,217.8 267.7,214.8 274.4,211.3 281.2,205.8 283.9,202.3 289.1,199.8 297.0,196.8 300.3,194.4 303.3,189.8 305.7,183.2 310.5,180.8 312.0,180.7 316.0,179.3 320.0,177.8 321.5,175.3 323.0,171.8 326.0,169.8 332.0,169.2 338.0,167.8 339.5,166.3 341.0,163.8 344.0,162.4 352.0,161.4 359.0,159.8 360.5,157.8 362.0,155.8 365.0,155.2 371.0,154.0 377.0,153.6 378.5,151.8 380.0,149.8 381.5,147.3 383.0,146.2 389.0,144.8 395.0,144.2 396.5,141.3 398.0,137.8 399.5,132.8 401.0,130.2 404.0,128.2 409.0,127.2 414.0,125.4 416.0,123.8 416.8,121.8 418.8,108.3 420.8,98.6 423.0,94.3 425.3,93.7 427.8,93.7 430.8,92.9 433.6,92.3 436.4,91.6 439.2,94.3 442.1,97.2 447.7,97.5 451.8,97.3 456.1,97.9 460.4,98.6 463.8,98.1 467.4,98.6 471.8,98.3 475.8,98.9 479.0,105.0 481.0,112.0 482.0,125.0 483.0,145.0 484.0,160.0 485.0,175.0 487.0,183.6 490.0,183.0 492.0,178.0 494.0,173.0 495.9,176.3 498.1,185.1 500.0,191.7 502.6,205.0 505.6,208.9 508.7,215.2 511.9,223.7 515.7,218.4 519.1,223.9 523.1,225.8 527.4,227.1 530.3,222.6 532.7,222.2 535.8,220.6 539.7,219.2 544.1,216.7 548.0,213.1 549.6,213.4 552.1,219.9 554.9,226.2 558.0,228.6 561.2,228.4 563.8,232.1 566.0,240.8 568.2,245.6 570.4,249.2 572.9,243.5 574.7,241.0 575.6,244.3" fill="none" stroke="#f0c870" stroke-width="0.36" stroke-linejoin="round" opacity="1"/>
<polyline points="240.0,265.6 246.0,264.0 249.0,260.0 251.0,257.6 253.0,261.0 255.0,264.0 257.0,262.0 259.0,250.0 261.0,236.0 262.4,228.4 264.0,231.0 266.2,234.0 269.0,228.4 272.5,219.4 276.0,215.0 279.0,213.8 281.5,216.0 283.8,207.0 285.0,203.0 289.4,200.5 297.3,197.4 300.6,195.0 302.1,192.9 303.6,190.4 306.0,183.8 307.6,183.0 309.2,182.4 310.8,181.3 312.0,180.2 314.0,179.9 316.0,179.8 318.0,179.1 320.0,178.2 321.5,175.7 323.0,172.2 324.5,171.3 326.0,170.3 327.5,170.0 329.0,169.5 330.5,169.3 332.0,168.7 333.5,168.9 335.0,168.4 336.5,168.4 338.0,168.2 339.5,166.7 341.0,164.2 342.5,163.2 344.0,162.9 345.6,162.7 347.2,162.2 348.8,162.1 350.4,161.6 352.0,161.0 353.8,160.6 355.5,160.5 357.2,160.5 359.0,160.2 360.5,158.2 362.0,156.2 363.5,155.2 365.0,154.8 366.5,154.7 368.0,154.4 369.5,154.2 371.0,154.4 372.5,153.8 374.0,154.0 375.5,153.2 377.0,153.2 378.5,152.2 380.0,150.2 381.5,147.7 383.0,145.8 384.5,145.5 386.0,145.4 387.5,145.6 389.0,145.2 390.5,144.6 392.0,144.5 393.5,144.2 395.0,143.8 396.5,141.7 398.0,138.2 399.5,133.2 401.0,129.8 402.5,129.5 404.0,128.6 405.7,128.2 407.3,127.7 409.0,126.8 410.7,126.3 412.3,126.1 414.0,125.8 416.0,124.2 417.0,120.6 419.0,108.1 421.0,97.4 423.2,94.1 425.5,92.5 428.0,93.5 429.5,92.5 431.0,91.7 433.8,92.1 436.6,90.4 439.4,94.1 442.3,96.0 444.2,96.7 446.0,97.2 447.9,97.3 449.9,96.5 452.0,96.1 454.1,96.7 456.3,97.7 458.5,97.4 460.6,97.4 462.3,97.5 464.0,97.9 465.8,97.6 467.6,97.4 469.8,97.8 472.0,98.1 474.0,97.7 476.0,97.7 478.9,101.1 481.7,103.1 483.8,112.5 484.5,121.1 485.0,136.1 486.0,160.0 487.0,168.0 488.5,170.0 490.0,165.0 491.5,164.0 493.0,172.0 494.0,185.0 495.0,195.0 497.0,199.0 499.0,206.0 501.0,203.0 503.0,211.0 506.0,212.0 509.0,214.0 511.0,207.0 512.0,203.0 514.0,210.0 517.0,216.0 521.0,223.0 524.0,225.0 527.0,228.0 530.0,223.0 533.0,220.0 536.0,216.0 540.0,214.6 544.0,215.0 547.0,215.6 549.0,213.0 551.0,219.0 554.0,225.0 556.0,232.0 558.0,229.0 560.0,238.0 562.0,236.0 564.0,233.0 566.0,242.0 568.0,248.0 570.0,252.0 573.0,249.6 576.0,252.6" fill="none" stroke="#c05858" stroke-width="0.36" stroke-linejoin="round" opacity="1"/>
<polyline points="240.0,265.6 250.0,265.0 256.0,263.0 257.8,257.0 260.2,242.0 262.4,227.0 265.8,226.0 269.0,222.7 274.7,216.0 280.4,213.7 282.6,209.0 284.2,203.6 289.4,200.3 297.3,197.3 300.6,194.9 302.1,192.8 303.6,190.3 306.0,183.7 307.6,183.0 309.2,181.9 310.8,181.2 312.0,180.5 314.0,179.9 316.0,179.5 318.0,178.6 320.0,178.0 321.5,175.5 323.0,172.0 324.5,171.2 326.0,170.0 327.5,169.8 329.0,169.7 330.5,169.1 332.0,169.0 333.5,168.6 335.0,168.7 336.5,168.5 338.0,168.0 339.5,166.5 341.0,164.0 342.5,163.5 344.0,162.6 345.6,162.5 347.2,162.2 348.8,161.9 350.4,161.3 352.0,161.2 353.8,160.9 355.5,160.5 357.2,160.0 359.0,160.0 360.5,158.0 362.0,156.0 363.5,155.2 365.0,155.0 366.5,154.7 368.0,154.5 369.5,154.5 371.0,154.2 372.5,154.3 374.0,153.8 375.5,153.9 377.0,153.4 378.5,152.0 380.0,150.0 381.5,147.5 383.0,146.0 384.5,146.0 386.0,145.8 387.5,145.2 389.0,145.0 390.5,144.6 392.0,144.3 393.5,144.1 395.0,144.0 396.5,141.5 398.0,138.0 399.5,133.0 401.0,130.0 402.5,129.0 404.0,128.4 405.7,128.0 407.3,127.7 409.0,127.0 410.7,126.7 412.3,126.1 414.0,125.6 416.0,124.0 417.3,121.8 419.3,108.3 421.3,98.6 423.5,94.3 425.8,93.7 428.3,93.7 429.8,93.4 431.3,92.9 434.1,92.3 436.9,91.6 439.7,94.3 442.6,98.7 444.5,99.0 446.3,98.7 448.2,99.0 450.2,99.0 452.3,98.8 454.5,99.3 456.6,99.4 458.8,99.9 460.9,100.1 462.6,100.0 464.3,99.6 466.1,99.8 467.9,100.1 470.1,99.8 472.3,99.8 474.3,100.3 476.3,100.4 479.2,101.3 482.0,104.3 484.1,112.7 484.8,122.3 485.3,136.3 486.0,160.0 487.0,168.0 488.5,170.0 490.0,165.0 491.5,164.0 493.0,172.0 495.0,180.0 496.6,187.9 499.9,198.1 503.4,207.3 506.0,212.2 510.1,214.3 514.3,213.4 517.3,217.5 520.9,220.8 523.7,225.2 526.6,226.3 529.8,221.5 532.9,221.3 535.6,217.4 539.7,217.8 543.6,217.6 547.1,215.4 548.8,212.8 550.9,219.4 554.3,226.8 557.0,232.0 558.7,239.4 560.9,244.6 564.3,243.5 566.6,248.7 570.0,245.4 572.0,242.2 575.0,246.8" fill="none" stroke="#585048" stroke-width="0.34" stroke-linejoin="round" opacity="1"/>
<polyline points="239.9,265.5 249.9,264.9 255.9,262.4 257.5,255.8 259.9,240.5 262.3,224.8 264.5,217.8 267.9,214.8 274.6,211.3 281.4,205.8 284.1,202.3 289.3,199.8 297.2,196.8 300.5,194.4 302.0,192.0 303.5,189.8 305.9,183.2 307.5,182.5 309.1,181.7 310.7,180.8 311.9,180.3 313.9,180.0 315.9,179.3 317.9,178.4 319.9,177.8 321.4,175.3 322.9,171.8 324.4,170.9 325.9,169.8 327.4,169.4 328.9,169.2 330.4,169.3 331.9,168.8 333.4,168.6 334.9,168.4 336.4,168.3 337.9,167.8 339.4,166.3 340.9,163.8 342.4,163.4 343.9,162.4 345.5,162.1 347.1,162.0 348.7,161.6 350.3,161.3 351.9,161.0 353.6,160.9 355.4,160.4 357.1,160.2 358.9,159.8 360.4,157.8 361.9,155.8 363.4,155.3 364.9,154.8 366.4,154.9 367.9,154.6 369.4,154.5 370.9,154.0 372.4,154.1 373.9,153.5 375.4,153.5 376.9,153.2 378.4,151.8 379.9,149.8 381.4,147.3 382.9,145.8 384.4,145.9 385.9,145.6 387.4,144.9 388.9,144.8 390.4,144.4 391.9,144.3 393.4,143.8 394.9,143.8 396.4,141.3 397.9,137.8 399.4,132.8 400.9,129.8 402.4,128.9 403.9,128.2 405.6,127.5 407.2,127.4 408.9,126.8 410.6,126.6 412.2,126.2 413.9,125.4 415.9,123.8 416.9,121.3 418.9,107.8 420.9,98.1 423.1,93.8 425.4,93.2 427.9,93.2 429.4,92.6 430.9,92.4 433.7,91.8 436.5,91.1 439.3,93.8 442.2,96.8 444.1,97.0 445.9,97.0 447.8,97.0 449.8,96.7 451.9,96.8 454.0,97.4 456.2,97.4 458.4,98.1 460.5,98.1 462.2,97.7 463.9,97.6 465.7,98.2 467.5,98.1 469.7,97.9 471.9,97.8 473.9,98.1 475.9,98.4 478.8,100.8 481.6,103.8 483.7,112.2 484.4,121.8 484.9,135.8 485.9,159.8 486.9,167.8 488.4,169.8 489.9,164.8 491.4,163.8 492.9,171.8 494.9,179.8 496.8,188.3 500.3,197.7 502.8,207.6 506.1,211.3 509.6,214.3 514.2,213.3 516.6,217.4 521.3,221.1 523.8,224.9 526.6,226.1 530.3,222.1 532.9,222.5 535.8,218.4 540.2,217.4 543.7,216.5 546.7,216.0 548.7,212.7 550.6,220.5 553.8,225.8 557.0,232.5 558.8,240.5 560.9,244.9 563.9,243.1 566.9,247.3 569.5,246.3 571.6,242.8 575.1,245.9" fill="none" stroke="#f0a048" stroke-width="0.42" stroke-linejoin="round" opacity="1"/>
</svg>
<div class="b " style="left:6341px;top:438px;width:740px;height:83px;background:#3c87d8;"></div>
<div class="b " style="left:6196px;top:456px;width:42px;height:42px;background:#fff;border:4.5px solid #8a8a8a;box-sizing:border-box;"></div>
<svg class="b" style="left:6196px;top:456px;width:42px;height:42px" viewBox="0 0 4.2 4.2"><path d="M0.9 2.1 L1.8 3.1 L3.4 0.9" fill="none" stroke="#222" stroke-width="0.75"/></svg>
<div class="b " style="left:6248px;top:474px;width:74px;height:7px;background:#e58f8f;"></div>
<span class="t f-m" style="left:6350px;top:449.4px;font-size:44px;line-height:57.2px;color:#fff;letter-spacing:-4.4px;">01-L1</span>
<div class="b " style="left:6196px;top:544.5px;width:42px;height:42px;background:#fff;border:4.5px solid #8a8a8a;box-sizing:border-box;"></div>
<svg class="b" style="left:6196px;top:544.5px;width:42px;height:42px" viewBox="0 0 4.2 4.2"><path d="M0.9 2.1 L1.8 3.1 L3.4 0.9" fill="none" stroke="#222" stroke-width="0.75"/></svg>
<div class="b " style="left:6248px;top:562.5px;width:74px;height:7px;background:#9fce9a;"></div>
<span class="t f-m" style="left:6350px;top:537.9px;font-size:44px;line-height:57.2px;color:#777;letter-spacing:-4.4px;">02-L2</span>
<div class="b " style="left:6196px;top:633px;width:42px;height:42px;background:#fff;border:4.5px solid #8a8a8a;box-sizing:border-box;"></div>
<svg class="b" style="left:6196px;top:633px;width:42px;height:42px" viewBox="0 0 4.2 4.2"><path d="M0.9 2.1 L1.8 3.1 L3.4 0.9" fill="none" stroke="#222" stroke-width="0.75"/></svg>
<div class="b " style="left:6248px;top:651px;width:74px;height:7px;background:#a3a3dc;"></div>
<span class="t f-m" style="left:6350px;top:626.4px;font-size:44px;line-height:57.2px;color:#777;letter-spacing:-4.4px;">03-L3</span>
<div class="b " style="left:6196px;top:721.5px;width:42px;height:42px;background:#fff;border:4.5px solid #8a8a8a;box-sizing:border-box;"></div>
<svg class="b" style="left:6196px;top:721.5px;width:42px;height:42px" viewBox="0 0 4.2 4.2"><path d="M0.9 2.1 L1.8 3.1 L3.4 0.9" fill="none" stroke="#222" stroke-width="0.75"/></svg>
<div class="b " style="left:6248px;top:739.5px;width:74px;height:7px;background:#6f6f6f;"></div>
<span class="t f-m" style="left:6350px;top:714.9px;font-size:44px;line-height:57.2px;color:#777;letter-spacing:-4.4px;">04-M1</span>
<div class="b " style="left:6196px;top:810px;width:42px;height:42px;background:#fff;border:4.5px solid #8a8a8a;box-sizing:border-box;"></div>
<svg class="b" style="left:6196px;top:810px;width:42px;height:42px" viewBox="0 0 4.2 4.2"><path d="M0.9 2.1 L1.8 3.1 L3.4 0.9" fill="none" stroke="#222" stroke-width="0.75"/></svg>
<div class="b " style="left:6248px;top:828px;width:74px;height:7px;background:#d9a9a9;"></div>
<span class="t f-m" style="left:6350px;top:803.4px;font-size:44px;line-height:57.2px;color:#777;letter-spacing:-4.4px;">05-M2</span>
<div class="b " style="left:6196px;top:898.5px;width:42px;height:42px;background:#fff;border:4.5px solid #8a8a8a;box-sizing:border-box;"></div>
<svg class="b" style="left:6196px;top:898.5px;width:42px;height:42px" viewBox="0 0 4.2 4.2"><path d="M0.9 2.1 L1.8 3.1 L3.4 0.9" fill="none" stroke="#222" stroke-width="0.75"/></svg>
<div class="b " style="left:6248px;top:916.5px;width:74px;height:7px;background:#b4d6ea;"></div>
<span class="t f-m" style="left:6350px;top:891.9px;font-size:44px;line-height:57.2px;color:#777;letter-spacing:-4.4px;">06-M3</span>
<div class="b " style="left:6196px;top:987px;width:42px;height:42px;background:#fff;border:4.5px solid #8a8a8a;box-sizing:border-box;"></div>
<svg class="b" style="left:6196px;top:987px;width:42px;height:42px" viewBox="0 0 4.2 4.2"><path d="M0.9 2.1 L1.8 3.1 L3.4 0.9" fill="none" stroke="#222" stroke-width="0.75"/></svg>
<div class="b " style="left:6248px;top:1005px;width:74px;height:7px;background:#f3d08c;"></div>
<span class="t f-m" style="left:6350px;top:980.4px;font-size:44px;line-height:57.2px;color:#777;letter-spacing:-4.4px;">07-R1</span>
<div class="b " style="left:6196px;top:1075.5px;width:42px;height:42px;background:#fff;border:4.5px solid #8a8a8a;box-sizing:border-box;"></div>
<svg class="b" style="left:6196px;top:1075.5px;width:42px;height:42px" viewBox="0 0 4.2 4.2"><path d="M0.9 2.1 L1.8 3.1 L3.4 0.9" fill="none" stroke="#222" stroke-width="0.75"/></svg>
<div class="b " style="left:6248px;top:1093.5px;width:74px;height:7px;background:#e29ae2;"></div>
<span class="t f-m" style="left:6350px;top:1068.9px;font-size:44px;line-height:57.2px;color:#777;letter-spacing:-4.4px;">08-R2</span>
<div class="b " style="left:6196px;top:1164px;width:42px;height:42px;background:#fff;border:4.5px solid #8a8a8a;box-sizing:border-box;"></div>
<svg class="b" style="left:6196px;top:1164px;width:42px;height:42px" viewBox="0 0 4.2 4.2"><path d="M0.9 2.1 L1.8 3.1 L3.4 0.9" fill="none" stroke="#222" stroke-width="0.75"/></svg>
<div class="b " style="left:6248px;top:1182px;width:74px;height:7px;background:#f3e684;"></div>
<span class="t f-m" style="left:6350px;top:1157.4px;font-size:44px;line-height:57.2px;color:#777;letter-spacing:-4.4px;">09-R3</span>
<div class="b " style="left:1200px;top:3086px;width:5900px;height:50px;background:#f5f5f5;"></div>
<div class="b " style="left:4010px;top:3100px;width:12px;height:10px;background:#d6d6d6;"></div>
<div class="b " style="left:4040px;top:3100px;width:12px;height:10px;background:#d6d6d6;"></div>
<div class="b " style="left:4070px;top:3100px;width:12px;height:10px;background:#d6d6d6;"></div>
<div class="b " style="left:4100px;top:3100px;width:12px;height:10px;background:#d6d6d6;"></div>
<div class="b " style="left:4130px;top:3100px;width:12px;height:10px;background:#d6d6d6;"></div>
<div class="b " style="left:4160px;top:3100px;width:12px;height:10px;background:#d6d6d6;"></div>
<div class="b " style="left:4190px;top:3100px;width:12px;height:10px;background:#d6d6d6;"></div>
<div class="b " style="left:4220px;top:3100px;width:12px;height:10px;background:#d6d6d6;"></div>
<div class="b " style="left:4250px;top:3100px;width:12px;height:10px;background:#d6d6d6;"></div>
<svg class="b" style="left:4124px;top:3096px;width:50px;height:30px" viewBox="0 0 5 3"><path d="M0.5 0.5 L4.5 0.5 L2.5 2.5 Z" fill="#6a6a6a"/></svg>
<div class="b " style="left:1200px;top:3128px;width:5900px;height:84px;background:#f0f0f0;"></div>
<div class="b " style="left:1200px;top:3127px;width:5900px;height:6px;background:#c2cad8;"></div>
<div class="b " style="left:1200px;top:3208px;width:5892px;height:388px;background:#ffffff;border:9px solid #86a8d8;box-sizing:border-box;"></div>
<svg class="b" style="left:1616px;top:3136px;width:534px;height:79px" viewBox="0 0 53.40 7.90"><path d="M0 7.90 L1.40 1.2 Q2.00 0.35 3.00 0.35 L49.40 0.35 Q50.40 0.35 50.40 1.4 L50.40 7.90" fill="#fafcfe" stroke="#86a8d8" stroke-width="0.7"/></svg>
<span class="t f-s" style="left:1710px;top:3146.5px;font-size:43px;line-height:55.9px;color:#484848;letter-spacing:0.62px;">Process Analysis</span>
<svg class="b" style="left:2120px;top:3136px;width:430px;height:79px" viewBox="0 0 43.00 7.90"><path d="M0 7.90 L1.40 1.2 Q2.00 0.35 3.00 0.35 L39.00 0.35 Q40.00 0.35 40.00 1.4 L40.00 7.90" fill="#fafcfe" stroke="#86a8d8" stroke-width="0.7"/></svg>
<span class="t f-s" style="left:2200px;top:3146.5px;font-size:43px;line-height:55.9px;color:#484848;letter-spacing:2.29px;">Temp/Slope</span>
<svg class="b" style="left:2520px;top:3136px;width:648px;height:79px" viewBox="0 0 64.80 7.90"><path d="M0 7.90 L1.40 1.2 Q2.00 0.35 3.00 0.35 L60.80 0.35 Q61.80 0.35 61.80 1.4 L61.80 7.90" fill="#fafcfe" stroke="#86a8d8" stroke-width="0.7"/></svg>
<span class="t f-s" style="left:2610px;top:3146.5px;font-size:43px;line-height:55.9px;color:#484848;letter-spacing:1.52px;">User-Defined Analysis</span>
<svg class="b" style="left:3138px;top:3136px;width:447px;height:79px" viewBox="0 0 44.70 7.90"><path d="M0 7.90 L1.40 1.2 Q2.00 0.35 3.00 0.35 L40.70 0.35 Q41.70 0.35 41.70 1.4 L41.70 7.90" fill="#fafcfe" stroke="#86a8d8" stroke-width="0.7"/></svg>
<span class="t f-s" style="left:3225px;top:3146.5px;font-size:43px;line-height:55.9px;color:#484848;letter-spacing:1.26px;">Temp Cursor</span>
<svg class="b" style="left:3555px;top:3136px;width:395px;height:79px" viewBox="0 0 39.50 7.90"><path d="M0 7.90 L1.40 1.2 Q2.00 0.35 3.00 0.35 L35.50 0.35 Q36.50 0.35 36.50 1.4 L36.50 7.90" fill="#fafcfe" stroke="#86a8d8" stroke-width="0.7"/></svg>
<span class="t f-s" style="left:3635px;top:3146.5px;font-size:43px;line-height:55.9px;color:#484848;letter-spacing:1.42px;">Simulation</span>
<svg class="b" style="left:3920px;top:3136px;width:704px;height:79px" viewBox="0 0 70.40 7.90"><path d="M0 7.90 L1.40 1.2 Q2.00 0.35 3.00 0.35 L66.40 0.35 Q67.40 0.35 67.40 1.4 L67.40 7.90" fill="#fafcfe" stroke="#86a8d8" stroke-width="0.7"/></svg>
<span class="t f-s" style="left:3986px;top:3146.5px;font-size:43px;line-height:55.9px;color:#484848;letter-spacing:1.42px;">Thermal Convection Result</span>
<svg class="b" style="left:1210px;top:3136px;width:436px;height:79px" viewBox="0 0 43.60 7.90"><path d="M0 7.90 L5.00 1.2 Q5.60 0.35 6.60 0.35 L39.60 0.35 Q40.60 0.35 40.60 1.4 L40.60 7.90" fill="#ffffff" stroke="#86a8d8" stroke-width="0.7"/></svg>
<span class="t f-sb" style="left:1322px;top:3146.5px;font-size:43px;line-height:55.9px;color:#1a1a1a;letter-spacing:1.32px;">Profile List</span>
<div class="b " style="left:1220px;top:3206px;width:390px;height:10px;background:#ffffff;"></div>
<svg class="b" style="left:7046px;top:3164px;width:40px;height:26px" viewBox="0 0 4 2.6"><path d="M0.4 0.3 L3.6 0.3 L2 2.3 Z" fill="#222"/></svg>
<div class="b " style="left:1210px;top:3214px;width:3350px;height:88px;background:#ffffff;border-bottom:5px solid #dcdcdc;box-sizing:border-box;"></div>
<div class="b " style="left:1281.5px;top:3214px;width:5px;height:332px;background:#e2e2e2;"></div>
<div class="b " style="left:1497.5px;top:3214px;width:5px;height:332px;background:#e2e2e2;"></div>
<span class="t f-m" style="left:1302px;top:3232.4px;font-size:44px;line-height:57.2px;color:#555;letter-spacing:-3.8px;">Test Tim</span>
<div class="b " style="left:1957.5px;top:3214px;width:5px;height:332px;background:#e2e2e2;"></div>
<span class="t f-m" style="left:1518px;top:3232.4px;font-size:44px;line-height:57.2px;color:#555;letter-spacing:-3.8px;">Process Spec</span>
<div class="b " style="left:2177.5px;top:3214px;width:5px;height:332px;background:#e2e2e2;"></div>
<span class="t f-m" style="left:1978px;top:3232.4px;font-size:44px;line-height:57.2px;color:#555;letter-spacing:-3.8px;">Product</span>
<div class="b " style="left:2397.5px;top:3214px;width:5px;height:332px;background:#e2e2e2;"></div>
<span class="t f-m" style="left:2198px;top:3232.4px;font-size:44px;line-height:57.2px;color:#555;letter-spacing:-3.8px;">Client N</span>
<div class="b " style="left:2665.5px;top:3214px;width:5px;height:332px;background:#e2e2e2;"></div>
<span class="t f-m" style="left:2418px;top:3232.4px;font-size:44px;line-height:57.2px;color:#555;letter-spacing:-3.8px;">Line Name</span>
<div class="b " style="left:3121.5px;top:3214px;width:5px;height:332px;background:#e2e2e2;"></div>
<span class="t f-m" style="left:2686px;top:3232.4px;font-size:44px;line-height:57.2px;color:#555;letter-spacing:-3.8px;">Process Recipe</span>
<div class="b " style="left:3290.5px;top:3214px;width:5px;height:332px;background:#e2e2e2;"></div>
<span class="t f-m" style="left:3142px;top:3232.4px;font-size:44px;line-height:57.2px;color:#555;letter-spacing:-3.8px;">Profil</span>
<div class="b " style="left:3577.5px;top:3214px;width:5px;height:332px;background:#e2e2e2;"></div>
<span class="t f-m" style="left:3311px;top:3232.4px;font-size:44px;line-height:57.2px;color:#555;letter-spacing:-3.8px;">Sampling Ti</span>
<div class="b " style="left:3803.5px;top:3214px;width:5px;height:332px;background:#e2e2e2;"></div>
<span class="t f-m" style="left:3598px;top:3232.4px;font-size:44px;line-height:57.2px;color:#555;letter-spacing:-3.8px;">Device T</span>
<div class="b " style="left:3980.5px;top:3214px;width:5px;height:332px;background:#e2e2e2;"></div>
<span class="t f-m" style="left:3824px;top:3232.4px;font-size:44px;line-height:57.2px;color:#555;letter-spacing:-3.8px;">Channe</span>
<div class="b " style="left:4112.5px;top:3214px;width:5px;height:332px;background:#e2e2e2;"></div>
<span class="t f-m" style="left:4001px;top:3232.4px;font-size:44px;line-height:57.2px;color:#555;letter-spacing:-3.8px;">Sens</span>
<div class="b " style="left:4332.5px;top:3214px;width:5px;height:332px;background:#e2e2e2;"></div>
<span class="t f-m" style="left:4133px;top:3232.4px;font-size:44px;line-height:57.2px;color:#555;letter-spacing:-3.8px;">Downlo</span>
<div class="b " style="left:4557.5px;top:3214px;width:5px;height:332px;background:#e2e2e2;"></div>
<span class="t f-m" style="left:4353px;top:3232.4px;font-size:44px;line-height:57.2px;color:#555;letter-spacing:-3.8px;">Profiler</span>
<div class="b " style="left:1284px;top:3302px;width:3276px;height:61px;background:#3c87d8;"></div>
<div class="b " style="left:1210px;top:3360px;width:74px;height:4.5px;background:#d0d0d0;"></div>
<span class="t f-m" style="left:1348px;top:3306.5px;font-size:43px;line-height:55.9px;color:#fff;letter-spacing:-3.8px;">2020…</span>
<span class="t f-m" style="left:1516px;top:3306.5px;font-size:43px;line-height:55.9px;color:#fff;letter-spacing:-3.8px;">Draco732B-1</span>
<span class="t f-m" style="left:1976px;top:3306.5px;font-size:43px;line-height:55.9px;color:#fff;letter-spacing:-3.8px;">Draco7…</span>
<span class="t f-m" style="left:2196px;top:3306.5px;font-size:43px;line-height:55.9px;color:#fff;letter-spacing:-3.8px;">MAS2</span>
<span class="t f-m" style="left:2416px;top:3306.5px;font-size:43px;line-height:55.9px;color:#fff;letter-spacing:-3.8px;">MAS2-Dra…</span>
<span class="t f-m" style="left:2684px;top:3306.5px;font-size:43px;line-height:55.9px;color:#fff;letter-spacing:-3.8px;">Draco732B-1</span>
<span class="t f-m" style="left:3140px;top:3306.5px;font-size:43px;line-height:55.9px;color:#fff;letter-spacing:-3.8px;">791066</span>
<span class="t f-m" style="left:3309px;top:3306.5px;font-size:43px;line-height:55.9px;color:#fff;letter-spacing:-3.8px;">0.2</span>
<span class="t f-m" style="left:3596px;top:3306.5px;font-size:43px;line-height:55.9px;color:#fff;letter-spacing:-3.8px;">BHE3-B</span>
<span class="t f-m" style="left:3822px;top:3306.5px;font-size:43px;line-height:55.9px;color:#fff;letter-spacing:-3.8px;">9</span>
<span class="t f-m" style="left:3999px;top:3306.5px;font-size:43px;line-height:55.9px;color:#fff;letter-spacing:-3.8px;">2…</span>
<span class="t f-m" style="left:4131px;top:3306.5px;font-size:43px;line-height:55.9px;color:#fff;letter-spacing:-3.8px;">2020-0…</span>
<span class="t f-m" style="left:4351px;top:3306.5px;font-size:43px;line-height:55.9px;color:#fff;letter-spacing:-3.8px;">0</span>
<div class="b " style="left:1287px;top:3307px;width:53px;height:51px;background:#d8382a;"></div>
<div class="b " style="left:1296px;top:3322px;width:35px;height:6px;background:#f3a59c;"></div>
<div class="b " style="left:1296px;top:3338px;width:35px;height:6px;background:#f3a59c;"></div>
<div class="b " style="left:1210px;top:3421px;width:3350px;height:4.5px;background:#e6e6e6;"></div>
<div class="b " style="left:1210px;top:3421px;width:74px;height:4.5px;background:#d0d0d0;"></div>
<span class="t f-m" style="left:1348px;top:3367.5px;font-size:43px;line-height:55.9px;color:#666;letter-spacing:-3.8px;">2020…</span>
<span class="t f-m" style="left:1516px;top:3367.5px;font-size:43px;line-height:55.9px;color:#666;letter-spacing:-3.8px;">Draco732B-1</span>
<span class="t f-m" style="left:1976px;top:3367.5px;font-size:43px;line-height:55.9px;color:#666;letter-spacing:-3.8px;">Draco7…</span>
<span class="t f-m" style="left:2196px;top:3367.5px;font-size:43px;line-height:55.9px;color:#666;letter-spacing:-3.8px;">MAS2</span>
<span class="t f-m" style="left:2416px;top:3367.5px;font-size:43px;line-height:55.9px;color:#666;letter-spacing:-3.8px;">MAS2-Dra…</span>
<span class="t f-m" style="left:2684px;top:3367.5px;font-size:43px;line-height:55.9px;color:#666;letter-spacing:-3.8px;">Draco732B-1</span>
<span class="t f-m" style="left:3140px;top:3367.5px;font-size:43px;line-height:55.9px;color:#666;letter-spacing:-3.8px;">791066</span>
<span class="t f-m" style="left:3309px;top:3367.5px;font-size:43px;line-height:55.9px;color:#666;letter-spacing:-3.8px;">0.2</span>
<span class="t f-m" style="left:3596px;top:3367.5px;font-size:43px;line-height:55.9px;color:#666;letter-spacing:-3.8px;">BHE3-B</span>
<span class="t f-m" style="left:3822px;top:3367.5px;font-size:43px;line-height:55.9px;color:#666;letter-spacing:-3.8px;">9</span>
<span class="t f-m" style="left:3999px;top:3367.5px;font-size:43px;line-height:55.9px;color:#666;letter-spacing:-3.8px;">2…</span>
<span class="t f-m" style="left:4131px;top:3367.5px;font-size:43px;line-height:55.9px;color:#666;letter-spacing:-3.8px;">2020-0…</span>
<span class="t f-m" style="left:4351px;top:3367.5px;font-size:43px;line-height:55.9px;color:#666;letter-spacing:-3.8px;">0</span>
<div class="b " style="left:1287px;top:3368px;width:53px;height:51px;background:#d8382a;"></div>
<div class="b " style="left:1296px;top:3383px;width:35px;height:6px;background:#f3a59c;"></div>
<div class="b " style="left:1296px;top:3399px;width:35px;height:6px;background:#f3a59c;"></div>
<div class="b " style="left:1210px;top:3482px;width:3350px;height:4.5px;background:#e6e6e6;"></div>
<div class="b " style="left:1210px;top:3482px;width:74px;height:4.5px;background:#d0d0d0;"></div>
<span class="t f-m" style="left:1348px;top:3428.5px;font-size:43px;line-height:55.9px;color:#666;letter-spacing:-3.8px;">2020…</span>
<span class="t f-m" style="left:1516px;top:3428.5px;font-size:43px;line-height:55.9px;color:#666;letter-spacing:-3.8px;">Draco732B-1</span>
<span class="t f-m" style="left:1976px;top:3428.5px;font-size:43px;line-height:55.9px;color:#666;letter-spacing:-3.8px;">Draco7…</span>
<span class="t f-m" style="left:2196px;top:3428.5px;font-size:43px;line-height:55.9px;color:#666;letter-spacing:-3.8px;">MAS2</span>
<span class="t f-m" style="left:2416px;top:3428.5px;font-size:43px;line-height:55.9px;color:#666;letter-spacing:-3.8px;">MAS2-Dra…</span>
<span class="t f-m" style="left:2684px;top:3428.5px;font-size:43px;line-height:55.9px;color:#666;letter-spacing:-3.8px;">Draco732B-1</span>
<span class="t f-m" style="left:3140px;top:3428.5px;font-size:43px;line-height:55.9px;color:#666;letter-spacing:-3.8px;">791066</span>
<span class="t f-m" style="left:3309px;top:3428.5px;font-size:43px;line-height:55.9px;color:#666;letter-spacing:-3.8px;">0.2</span>
<span class="t f-m" style="left:3596px;top:3428.5px;font-size:43px;line-height:55.9px;color:#666;letter-spacing:-3.8px;">BHE3-B</span>
<span class="t f-m" style="left:3822px;top:3428.5px;font-size:43px;line-height:55.9px;color:#666;letter-spacing:-3.8px;">9</span>
<span class="t f-m" style="left:3999px;top:3428.5px;font-size:43px;line-height:55.9px;color:#666;letter-spacing:-3.8px;">1…</span>
<span class="t f-m" style="left:4131px;top:3428.5px;font-size:43px;line-height:55.9px;color:#666;letter-spacing:-3.8px;">2020-0…</span>
<span class="t f-m" style="left:4351px;top:3428.5px;font-size:43px;line-height:55.9px;color:#666;letter-spacing:-3.8px;">0</span>
<div class="b " style="left:1287px;top:3429px;width:53px;height:51px;background:#d8382a;"></div>
<div class="b " style="left:1296px;top:3444px;width:35px;height:6px;background:#f3a59c;"></div>
<div class="b " style="left:1296px;top:3460px;width:35px;height:6px;background:#f3a59c;"></div>
<div class="b " style="left:1210px;top:3543px;width:3350px;height:4.5px;background:#e6e6e6;"></div>
<div class="b " style="left:1210px;top:3543px;width:74px;height:4.5px;background:#d0d0d0;"></div>
<span class="t f-m" style="left:1348px;top:3489.5px;font-size:43px;line-height:55.9px;color:#666;letter-spacing:-3.8px;">2020…</span>
<span class="t f-m" style="left:1516px;top:3489.5px;font-size:43px;line-height:55.9px;color:#666;letter-spacing:-3.8px;">Draco732B-1</span>
<span class="t f-m" style="left:1976px;top:3489.5px;font-size:43px;line-height:55.9px;color:#666;letter-spacing:-3.8px;">Draco7…</span>
<span class="t f-m" style="left:2196px;top:3489.5px;font-size:43px;line-height:55.9px;color:#666;letter-spacing:-3.8px;">MAS2</span>
<span class="t f-m" style="left:2416px;top:3489.5px;font-size:43px;line-height:55.9px;color:#666;letter-spacing:-3.8px;">MAS2-Dra…</span>
<span class="t f-m" style="left:2684px;top:3489.5px;font-size:43px;line-height:55.9px;color:#666;letter-spacing:-3.8px;">Draco732B-1</span>
<span class="t f-m" style="left:3140px;top:3489.5px;font-size:43px;line-height:55.9px;color:#666;letter-spacing:-3.8px;">791066</span>
<span class="t f-m" style="left:3309px;top:3489.5px;font-size:43px;line-height:55.9px;color:#666;letter-spacing:-3.8px;">0.2</span>
<span class="t f-m" style="left:3596px;top:3489.5px;font-size:43px;line-height:55.9px;color:#666;letter-spacing:-3.8px;">BHE3-B</span>
<span class="t f-m" style="left:3822px;top:3489.5px;font-size:43px;line-height:55.9px;color:#666;letter-spacing:-3.8px;">9</span>
<span class="t f-m" style="left:3999px;top:3489.5px;font-size:43px;line-height:55.9px;color:#666;letter-spacing:-3.8px;">1…</span>
<span class="t f-m" style="left:4131px;top:3489.5px;font-size:43px;line-height:55.9px;color:#666;letter-spacing:-3.8px;">2020-0…</span>
<span class="t f-m" style="left:4351px;top:3489.5px;font-size:43px;line-height:55.9px;color:#666;letter-spacing:-3.8px;">0</span>
<div class="b " style="left:1287px;top:3490px;width:53px;height:51px;background:#d8382a;"></div>
<div class="b " style="left:1296px;top:3505px;width:35px;height:6px;background:#f3a59c;"></div>
<div class="b " style="left:1296px;top:3521px;width:35px;height:6px;background:#f3a59c;"></div>
<svg class="b" style="left:1236px;top:3316px;width:30px;height:34px" viewBox="0 0 3 3.4"><path d="M0.5 0.3 L2.5 1.7 L0.5 3.1 Z" fill="#111"/></svg>
<svg class="b" style="left:4296px;top:3246px;width:28px;height:26px" viewBox="0 0 2.8 2.6"><path d="M0.3 0.4 L2.5 0.4 L1.4 2.3 Z" fill="none" stroke="#888" stroke-width="0.35"/></svg>
<div class="b " style="left:1200px;top:3600px;width:5900px;height:16px;background:#f0f0f0;"></div>
<div class="b " style="left:1200px;top:3616px;width:5900px;height:220px;background:#fbfbfb;border-top:5px solid #cfcfcf;border-left:6px solid #c8d6ea;box-sizing:border-box;"></div>
<span class="t f-m" style="left:1216px;top:3671.4px;font-size:44px;line-height:57.2px;color:#444;letter-spacing:-4.9px;">Curvelist Show Mode:</span>
<div class="b " style="left:1706px;top:3664px;width:556px;height:72px;background:#e3e3e3;border:5px solid #b4b4b4;box-sizing:border-box;"></div>
<span class="t f-m" style="left:1724px;top:3671.4px;font-size:44px;line-height:57.2px;color:#333;letter-spacing:-4.05px;">Show all Profiles</span>
<svg class="b" style="left:2210px;top:3688px;width:40px;height:30px" viewBox="0 0 4 3"><path d="M0.5 0.6 L2 2.2 L3.5 0.6" fill="none" stroke="#555" stroke-width="0.6"/></svg>
<span class="t f-s" style="left:6474px;top:3761px;font-size:43px;line-height:55.9px;color:#444;letter-spacing:2.12px;">www.esamber.com Ver5.0.35</span>
<div class="b " style="left:0px;top:3838px;width:7100px;height:146px;background:linear-gradient(90deg,#2b3c46 0%,#293a46 48%,#253548 70%,#1c2a4a 100%);"></div>
<div class="b " style="left:0px;top:3984px;width:7100px;height:16px;background:linear-gradient(90deg,#050505 0%,#050505 3.1%,#7a7a7a 3.3%,#606060 48%,#707070 70%,#3a3a3a 96%,#000 97%);"></div>
<div class="b " style="left:6860px;top:3984px;width:240px;height:16px;background:#050505;"></div>
<div class="b " style="left:7084px;top:3837px;width:16px;height:146px;background:#3b4b68;"></div>
<div class="b " style="left:1096px;top:3838px;width:176px;height:146px;background:#4e5d69;"></div>
<div class="b " style="left:570px;top:3972px;width:140px;height:11px;background:#7fb8e8;"></div>
<div class="b " style="left:934px;top:3972px;width:136px;height:11px;background:#7fb8e8;"></div>
<div class="b " style="left:1096px;top:3972px;width:176px;height:11px;background:#7fb8e8;"></div>
<div class="b " style="left:0px;top:0px;width:16px;height:3984px;background:#000;"></div>
<svg class="b" style="left:0;top:0;width:7100px;height:4000px" viewBox="0 0 710 400" font-family="Liberation Sans, sans-serif">
<defs>
<radialGradient id="gInfo" cx="0.45" cy="0.35" r="0.7"><stop offset="0" stop-color="#b9c9d6"/><stop offset="0.5" stop-color="#5f7f9c"/><stop offset="1" stop-color="#2a3f58"/></radialGradient>
<radialGradient id="gFire" cx="0.36" cy="0.36" r="0.7"><stop offset="0" stop-color="#f6a030"/><stop offset="0.38" stop-color="#d2541a"/><stop offset="0.68" stop-color="#7c1c0e"/><stop offset="0.95" stop-color="#240806"/></radialGradient>
<radialGradient id="gRad" cx="0.5" cy="0.4" r="0.6"><stop offset="0" stop-color="#fff6a0"/><stop offset="0.7" stop-color="#f5d328"/><stop offset="1" stop-color="#c59a10"/></radialGradient>
<linearGradient id="gLock" x1="0" x2="1"><stop offset="0" stop-color="#f7efcf"/><stop offset="0.5" stop-color="#e8d89c"/><stop offset="1" stop-color="#cfb56e"/></linearGradient>
<linearGradient id="gPaper" x1="0" x2="1" y1="0" y2="1"><stop offset="0" stop-color="#ffffff"/><stop offset="0.7" stop-color="#f6f4ea"/><stop offset="1" stop-color="#e6e2d0"/></linearGradient>
<linearGradient id="gTab" x1="0" x2="0" y1="0" y2="1"><stop offset="0" stop-color="#eeeef2"/><stop offset="1" stop-color="#9a9ca6"/></linearGradient>
</defs>
<circle cx="4.7" cy="4.2" r="2.5" fill="none" stroke="#e8871e" stroke-width="1.3"/><rect x="4.2" y="0.8" width="1" height="1.6" fill="#fff"/><rect x="4.2" y="6" width="1" height="1.6" fill="#fff"/>
<line x1="665.8" y1="3.4" x2="669.6" y2="3.4" stroke="#444" stroke-width="0.5"/>
<rect x="682.2" y="2.3" width="3" height="3" fill="#fff" stroke="#444" stroke-width="0.45"/><path d="M683.2 2.3 V1.3 H686.2 V4.3 H685.2" fill="none" stroke="#444" stroke-width="0.45"/>
<path d="M699.2 1.5 L703 5.3 M703 1.5 L699.2 5.3" stroke="#444" stroke-width="0.5" fill="none"/>
<path d="M18.2 17.5 V14.5 A2.6 2.6 0 0 1 23.4 14.5 V17.5" fill="none" stroke="#b9bcc4" stroke-width="1.2"/>
<rect x="16.6" y="17" width="8.2" height="7.6" rx="0.8" fill="url(#gLock)"/>
<path d="M23.6 18.6 V15.4 A3 3 0 0 1 29.6 15.4 V17" fill="none" stroke="#c3c6cd" stroke-width="1.3"/>
<rect x="21.6" y="18.4" width="9.6" height="8" rx="0.8" fill="url(#gLock)" stroke="#c9b56e" stroke-width="0.3"/>
<circle cx="62" cy="18.6" r="7.6" fill="url(#gInfo)"/>
<ellipse cx="62" cy="14.4" rx="5.6" ry="3.2" fill="#ffffff" opacity="0.22"/>
<text x="62" y="23.2" font-size="12" font-weight="bold" fill="#fff" text-anchor="middle" font-family="Liberation Serif, serif">i</text>
<path d="M91.4 13.2 Q91.4 11.8 92.8 11.8 H98.4 L99.8 13.2 H108.6 Q110 13.2 110 14.6 V24.8 Q110 26.2 108.6 26.2 H92.8 Q91.4 26.2 91.4 24.8 Z" fill="#a9c2ee"/>
<rect x="92.2" y="14.6" width="17" height="10.8" rx="0.8" fill="#c6d8f6"/>
<path d="M96 14.6 L105.8 24.2" stroke="#a4a9b2" stroke-width="1.3"/>
<path d="M105 14 L97.2 23.8" stroke="#ecd050" stroke-width="1.7"/>
<circle cx="96" cy="14.4" r="1.6" fill="#c0c4cc"/>
<path d="M103.8 13 L106.8 15.6" stroke="#f6f6f6" stroke-width="1.3"/>
<path d="M137.6 11.6 H145.6 L148 14 V24.2 H137.6 Z" fill="#d9d3ae"/>
<path d="M135.4 13 H143.6 L146 15.6 V26.2 H135.4 Z" fill="url(#gPaper)" stroke="#c9c4a6" stroke-width="0.35"/>
<path d="M143.6 13 V15.6 H146 Z" fill="#d6d0b0"/>
<circle cx="179.5" cy="18.2" r="8.3" fill="url(#gFire)"/>
<path d="M173 17 Q174 13.4 176.6 13.6 L177.6 15.6 L179.2 12.6 L180.6 15.4 L182.6 13.8 L182.2 17.4 L183.8 18.6 L181.4 20.4 L178.6 19 L176.8 21 L175.2 19 Z" fill="#ffcf40" opacity="0.8"/>
<path d="M175.4 16.6 L177 17.6 L178.8 15.6 L180.4 17.8 L179 18.6 L176.6 18.8 Z" fill="#fff2a0" opacity="0.7"/>
<path d="M214.4 11.6 L222.6 11.2 L223 18 L214.6 18.4 Z" fill="#4a96e0"/><path d="M214.4 11.6 L218.4 10.4 L226 10.4 L222.6 11.2 Z" fill="#8cc4f4"/><path d="M222.6 11.2 L226 10.4 L226.2 16.8 L223 18 Z" fill="#2f74c2"/>
<path d="M208.6 18.4 L216.4 18 L216.8 25.6 L208.8 26 Z" fill="#d8413a"/><path d="M208.6 18.4 L212 17 L219.4 17 L216.4 18 Z" fill="#f08a84"/><path d="M216.4 18 L219.4 17 L219.6 24.4 L216.8 25.6 Z" fill="#ae2c26"/>
<path d="M219.2 19 L226.8 18.6 L227.2 25.8 L219.4 26.2 Z" fill="#4fb748"/><path d="M219.2 19 L222.4 17.8 L229.6 17.8 L226.8 18.6 Z" fill="#94dc8c"/><path d="M226.8 18.6 L229.6 17.8 L229.8 24.6 L227.2 25.8 Z" fill="#2f8d2c"/>
<path d="M249.2 23.6 Q249.4 16.4 254 15.6 H264 Q268.4 16.4 268.6 23.6 Q259 26.6 249.2 23.6 Z" fill="url(#gTab)"/>
<path d="M252.6 17.6 H264.8 L265.8 22 H251.8 Z" fill="#d4d6dc" opacity="0.9"/>
<path d="M249.2 23.4 Q259 26.4 268.6 23.4 L268.4 25 Q259 28 249.4 25 Z" fill="#5e616a"/>
<path d="M260.2 18.8 L266.6 10.4" stroke="#5a5c64" stroke-width="0.9"/>
<path d="M260.2 18.8 L261.2 17.4" stroke="#2a2a2e" stroke-width="1"/>
<circle cx="297" cy="18" r="8.6" fill="url(#gRad)"/>
<circle cx="297" cy="18" r="8.3" fill="none" stroke="#3a3010" stroke-width="0.6"/>
<path d="M301.00 24.93 A8.0 8.0 0 0 1 293.00 24.93 L296.05 19.65 A1.9 1.9 0 0 0 297.95 19.65 Z" fill="#1c1a14"/>
<path d="M301.00 11.07 A8.0 8.0 0 0 1 305.00 18.00 L298.90 18.00 A1.9 1.9 0 0 0 297.95 16.35 Z" fill="#1c1a14"/>
<path d="M289.00 18.00 A8.0 8.0 0 0 1 293.00 11.07 L296.05 16.35 A1.9 1.9 0 0 0 295.10 18.00 Z" fill="#1c1a14"/>
<circle cx="297" cy="18" r="1.2" fill="#1c1a14"/>
<path d="M289.2 26.8 L289.2 31.4 L290.4 30.4 L291.2 32.2 L291.9 31.9 L291.1 30.1 L292.6 30 Z" fill="#fff" stroke="#333" stroke-width="0.3"/>
<rect x="328.2" y="19.6" width="14" height="5.6" rx="0.6" fill="#c8cace"/>
<rect x="328.2" y="22" width="14" height="3.2" fill="#44464c"/>
<rect x="330.2" y="17" width="10" height="3.6" fill="#e8eaee"/>
<circle cx="331.8" cy="14.4" r="4.5" fill="#e9f0f8" stroke="#a4a8b2" stroke-width="1.1"/>
<path d="M335.2 17.8 L341 23.2" stroke="#8a8e96" stroke-width="1.6"/>
<circle cx="374.2" cy="19.2" r="6.2" fill="#c8b060"/>
<path d="M374.2 19.2 L368.09 21.42 A6.5 6.5 0 0 1 368.36 16.35 Z" fill="#e8403a"/>
<path d="M374.2 19.2 L368.31 16.45 A6.5 6.5 0 0 1 372.08 13.05 Z" fill="#f08a2a"/>
<path d="M374.2 19.2 L371.98 13.09 A6.5 6.5 0 0 1 377.05 13.36 Z" fill="#f2d83a"/>
<path d="M374.2 19.2 L376.95 13.31 A6.5 6.5 0 0 1 380.35 17.08 Z" fill="#7acb3e"/>
<path d="M374.2 19.2 L380.31 16.98 A6.5 6.5 0 0 1 380.04 22.05 Z" fill="#35b08a"/>
<path d="M374.2 19.2 L380.09 21.95 A6.5 6.5 0 0 1 376.32 25.35 Z" fill="#3a8fd8"/>
<path d="M374.2 19.2 L376.42 25.31 A6.5 6.5 0 0 1 371.35 25.04 Z" fill="#7a5fcf"/>
<path d="M374.2 19.2 L371.45 25.09 A6.5 6.5 0 0 1 368.05 21.32 Z" fill="#d450b0"/>
<circle cx="378.6" cy="15.4" r="3.6" fill="#dfe8f4" fill-opacity="0.75" stroke="#9a8fb8" stroke-width="0.9"/>
<path d="M381 18.4 L384.6 23" stroke="#4a4a52" stroke-width="1.3"/>
<path d="M394.6 31.2 L396.6 31.2 L395.6 32.6 Z" fill="#333"/>
<path d="M6.4 46.6 H9.6 L10.4 47.6 H14.6 V53.4 H6.4 Z" fill="#e9d27a"/><path d="M7.4 49 H15.8 L14.6 53.4 H6.4 Z" fill="#f3e29a"/><path d="M11 51.6 Q13.6 48.6 15.4 51.4 L16.4 50.6 L16 53.8 L13 53.2 L14.2 52.4 Q13 50.6 11 51.6 Z" fill="#4fae3a"/>
<rect x="45.2" y="46.2" width="5.4" height="2.2" fill="#4fb0e8"/><rect x="45.2" y="51.4" width="5.4" height="2.2" fill="#6ac846"/><path d="M46.4 49 L47.9 50.6 L49.4 49 Z M46.4 51 L47.9 49.4 L49.4 51 Z" fill="#3a8fd0"/>
<rect x="82.6" y="46" width="5" height="6.4" fill="#eaf1fa" stroke="#b9c6da" stroke-width="0.3"/><circle cx="85.4" cy="49.4" r="2" fill="#cfe4f8" stroke="#7fa6d6" stroke-width="0.6"/><path d="M86.8 51 L88.8 53.6" stroke="#3f78c8" stroke-width="0.9"/>
<rect x="7" y="388.2" width="2.5" height="2.5" fill="#ffffff"/>
<rect x="9.9" y="388.2" width="2.5" height="2.5" fill="#ffffff"/>
<rect x="7" y="391.09999999999997" width="2.5" height="2.5" fill="#ffffff"/>
<rect x="9.9" y="391.09999999999997" width="2.5" height="2.5" fill="#ffffff"/>
<circle cx="27.4" cy="391" r="2.7" fill="none" stroke="#fff" stroke-width="1.1"/>
<rect x="42.8" y="388.8" width="4.4" height="4.4" fill="none" stroke="#fff" stroke-width="0.7"/><path d="M48.4 388.6 V393.4 M41.8 389.4 V392.6" stroke="#fff" stroke-width="0.7"/><path d="M47.2 390 H49.2" stroke="#fff" stroke-width="0.6"/>
<text x="64.4" y="395" font-size="11" font-weight="bold" fill="#3a8ee6" text-anchor="middle">e</text>
<path d="M78 387.8 H81.4 L82.4 388.8 H87 V394.8 H78 Z" fill="#f0c84a"/><rect x="79.2" y="390.4" width="6.6" height="3.4" fill="#6ab0e8"/><rect x="78" y="393.6" width="9" height="1.2" fill="#f6dc7a"/>
<rect x="96" y="387" width="8.6" height="8.4" rx="0.9" fill="#c8281e"/><text x="100.3" y="392.6" font-size="4.6" font-weight="bold" fill="#fff" text-anchor="middle">S.E</text><rect x="97.6" y="393.6" width="5.6" height="1" fill="#f0d0c8"/>
<circle cx="118.4" cy="391" r="3.4" fill="none" stroke="#f08a1e" stroke-width="1.4"/><rect x="117.7" y="386.4" width="1.4" height="2.2" fill="#4e5d69"/><rect x="117.7" y="393.4" width="1.4" height="2.2" fill="#4e5d69"/>
<rect x="537.2" y="388.4" width="4.4" height="4.4" rx="0.5" fill="#e4e4e4"/>
<text x="548" y="392.8" font-size="6" font-weight="bold" fill="#f0f0f0" text-anchor="middle" font-family="Liberation Sans, Noto Sans CJK SC, sans-serif">英</text>
<path d="M554.4 392.2 A1 1 0 1 0 556.2 391.4 L556.2 388.6 L557.2 389.4" fill="none" stroke="#e8e8e8" stroke-width="0.6"/>
<text x="562.4" y="391.6" font-size="4" fill="#e8e8e8" text-anchor="middle">°,</text>
<text x="569.6" y="392.8" font-size="6" font-weight="bold" fill="#f0f0f0" text-anchor="middle" font-family="Liberation Sans, Noto Sans CJK SC, sans-serif">简</text>
<circle cx="577.6" cy="390.6" r="1.9" fill="#9aa0a8" stroke="#d8d8d8" stroke-width="0.5"/>
<rect x="594.6" y="388.6" width="2.6" height="4.8" rx="0.4" fill="#7ad24a"/>
<path d="M604.8 391.8 L606.8 389.8 L608.8 391.8" fill="none" stroke="#e8e8e8" stroke-width="0.6"/>
<circle cx="615.2" cy="391" r="2" fill="#e84a3a"/><path d="M615.2 391 L617.2 391 A2 2 0 0 1 614.2 392.8 Z" fill="#4ab04a"/>
<ellipse cx="624.4" cy="390.8" rx="2.6" ry="2" fill="#8fd86a"/><ellipse cx="626" cy="391.8" rx="1.8" ry="1.4" fill="#d8f0c8"/>
<circle cx="634.2" cy="391" r="2.3" fill="#e8d82a"/><circle cx="634.2" cy="391" r="1" fill="#8a9a2a"/>
<rect x="641" y="389.4" width="3.6" height="2.8" fill="none" stroke="#e8e8e8" stroke-width="0.6"/><path d="M640 390 V393.4 H642.6" fill="none" stroke="#e8e8e8" stroke-width="0.5"/>
<path d="M648.4 390.2 H649.6 L650.8 389 V393 L649.6 391.8 H648.4 Z" fill="#e8e8e8"/><path d="M651.8 389.8 Q652.8 391 651.8 392.2" fill="none" stroke="#ccc" stroke-width="0.4"/>
<text x="659.4" y="393" font-size="5.8" font-weight="bold" fill="#f0f0f0" text-anchor="middle" font-family="Liberation Sans, Noto Sans CJK SC, sans-serif">英</text>
<text x="677.4" y="389.4" font-size="3.9" font-weight="bold" fill="#fff" text-anchor="middle">18:21</text>
<text x="678.6" y="395.6" font-size="3.9" font-weight="bold" fill="#fff" text-anchor="middle">2020/3/3</text>
<path d="M696.2 388.4 H701.4 V392.4 H699.4 L698.6 393.6 L697.8 392.4 H696.2 Z" fill="none" stroke="#f0f0f0" stroke-width="0.6"/>
</svg>
</div></body></html>
